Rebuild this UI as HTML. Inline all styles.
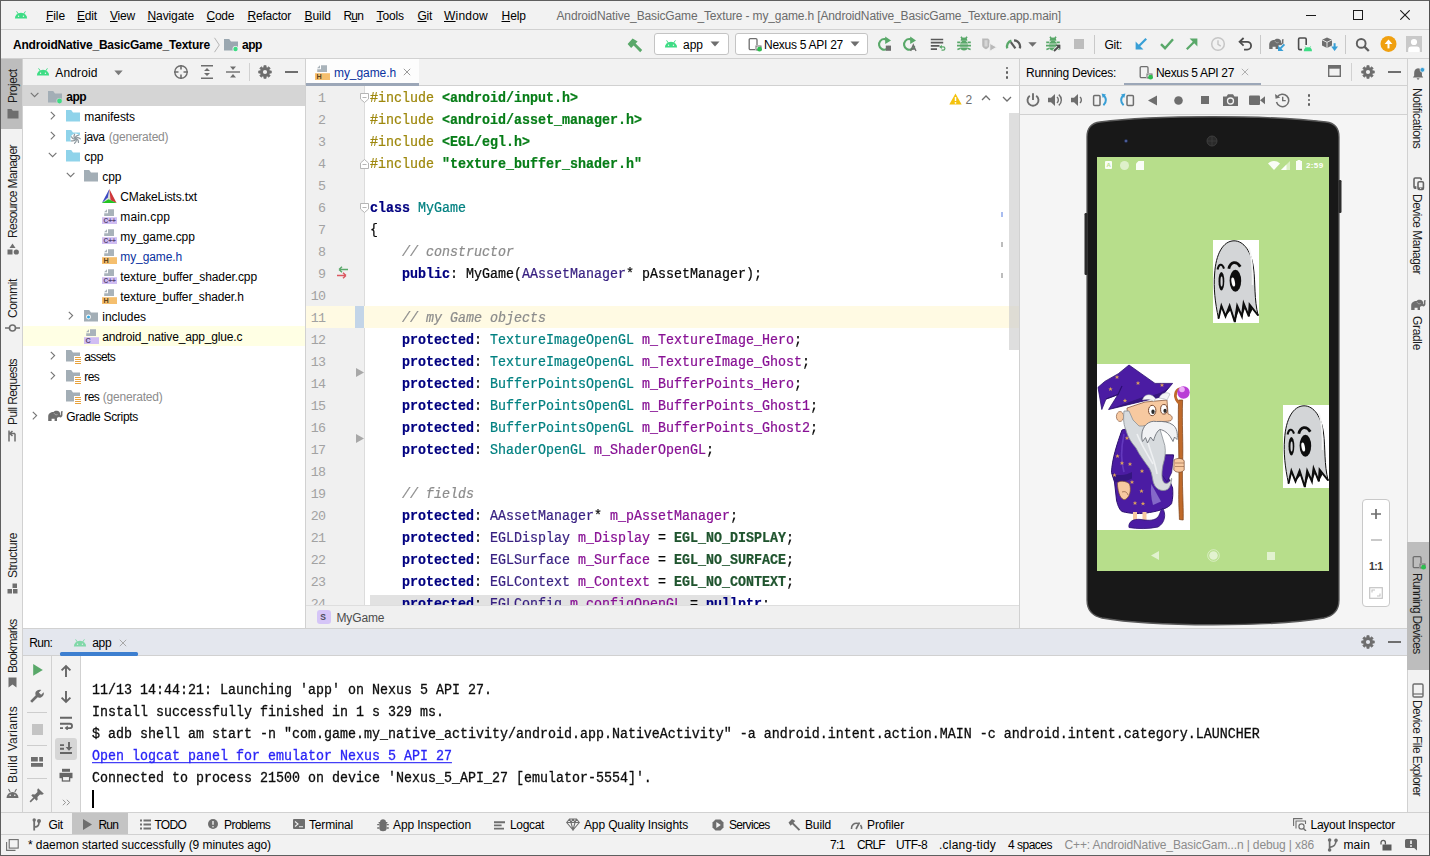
<!DOCTYPE html>
<html><head><meta charset="utf-8"><title>Android Studio</title>
<style>
html,body{margin:0;padding:0}
body{width:1430px;height:856px;position:relative;overflow:hidden;background:#f2f2f2;font-family:"Liberation Sans",sans-serif;font-size:12px;color:#000}
u{text-decoration:underline;text-underline-offset:1px}
</style></head>
<body>
<div style="position:absolute;left:0px;top:0px;width:1430px;height:29px;background:#f2f2f2;"></div>
<div style="position:absolute;left:0px;top:29px;width:1430px;height:1px;background:#d1d1d1;"></div>
<svg style="position:absolute;left:14px;top:8px;" width="14" height="14" viewBox="0 0 16 16"><path d="M1 12 A7 6.5 0 0 1 15 12 Z" fill="#3ddc84"/><path d="M3.2 4.2 L5 7 M12.8 4.2 L11 7" stroke="#3ddc84" stroke-width="1.1" stroke-linecap="round"/><circle cx="5.2" cy="9.5" r="0.8" fill="#f2f2f2"/><circle cx="10.8" cy="9.5" r="0.8" fill="#f2f2f2"/></svg>
<div style="position:absolute;left:46px;top:7.34px;line-height:18px;font-size:12px;font-family:'Liberation Sans',sans-serif;color:#000;white-space:pre;letter-spacing:-0.084px;"><u>F</u>ile</div>
<div style="position:absolute;left:77px;top:7.34px;line-height:18px;font-size:12px;font-family:'Liberation Sans',sans-serif;color:#000;white-space:pre;letter-spacing:-0.169px;"><u>E</u>dit</div>
<div style="position:absolute;left:110px;top:7.34px;line-height:18px;font-size:12px;font-family:'Liberation Sans',sans-serif;color:#000;white-space:pre;letter-spacing:-0.198px;"><u>V</u>iew</div>
<div style="position:absolute;left:147.5px;top:7.34px;line-height:18px;font-size:12px;font-family:'Liberation Sans',sans-serif;color:#000;white-space:pre;letter-spacing:-0.108px;"><u>N</u>avigate</div>
<div style="position:absolute;left:206.5px;top:7.34px;line-height:18px;font-size:12px;font-family:'Liberation Sans',sans-serif;color:#000;white-space:pre;letter-spacing:-0.297px;"><u>C</u>ode</div>
<div style="position:absolute;left:247.5px;top:7.34px;line-height:18px;font-size:12px;font-family:'Liberation Sans',sans-serif;color:#000;white-space:pre;letter-spacing:-0.231px;"><u>R</u>efactor</div>
<div style="position:absolute;left:304.5px;top:7.34px;line-height:18px;font-size:12px;font-family:'Liberation Sans',sans-serif;color:#000;white-space:pre;letter-spacing:-0.037px;"><u>B</u>uild</div>
<div style="position:absolute;left:343.5px;top:7.34px;line-height:18px;font-size:12px;font-family:'Liberation Sans',sans-serif;color:#000;white-space:pre;letter-spacing:-0.838px;">R<u>u</u>n</div>
<div style="position:absolute;left:376.5px;top:7.34px;line-height:18px;font-size:12px;font-family:'Liberation Sans',sans-serif;color:#000;white-space:pre;letter-spacing:-0.103px;"><u>T</u>ools</div>
<div style="position:absolute;left:417.5px;top:7.34px;line-height:18px;font-size:12px;font-family:'Liberation Sans',sans-serif;color:#000;white-space:pre;letter-spacing:-0.278px;"><u>G</u>it</div>
<div style="position:absolute;left:444px;top:7.34px;line-height:18px;font-size:12px;font-family:'Liberation Sans',sans-serif;color:#000;white-space:pre;letter-spacing:0.220px;"><u>W</u>indow</div>
<div style="position:absolute;left:501.5px;top:7.34px;line-height:18px;font-size:12px;font-family:'Liberation Sans',sans-serif;color:#000;white-space:pre;letter-spacing:-0.045px;"><u>H</u>elp</div>
<div style="position:absolute;left:556.5px;top:7.34px;line-height:18px;font-size:12px;font-family:'Liberation Sans',sans-serif;color:#6b6b6b;white-space:pre;letter-spacing:-0.137px;">AndroidNative_BasicGame_Texture - my_game.h [AndroidNative_BasicGame_Texture.app.main]</div>
<div style="position:absolute;left:1306px;top:15px;width:10px;height:1px;background:#1a1a1a;"></div>
<div style="position:absolute;left:1353px;top:10px;width:8px;height:8px;border:1px solid #1a1a1a"></div>
<svg style="position:absolute;left:1400px;top:10px;" width="10" height="10" viewBox="0 0 10 10"><path d="M0.3 0.3 L9.7 9.7 M9.7 0.3 L0.3 9.7" stroke="#1a1a1a" stroke-width="1.1" fill="none"/></svg>
<div style="position:absolute;left:0px;top:30px;width:1430px;height:28px;background:#f2f2f2;"></div>
<div style="position:absolute;left:0px;top:58px;width:1430px;height:1px;background:#d1d1d1;"></div>
<div style="position:absolute;left:13px;top:35.84px;line-height:18px;font-size:12px;font-family:'Liberation Sans',sans-serif;color:#000;white-space:pre;font-weight:bold;letter-spacing:-0.200px;">AndroidNative_BasicGame_Texture</div>
<svg style="position:absolute;left:213px;top:36.5px;" width="8" height="16" viewBox="0 0 8 16"><path d="M1.5 0.8 L6.3 8 L1.5 15.2" stroke="#b4b4b4" stroke-width="1" fill="none"/></svg>
<svg style="position:absolute;left:223px;top:37px;" width="16" height="16" viewBox="0 0 16 16"><path d="M1 2 H6.2 L8 4.5 H15 V13.5 H1 Z" fill="#9aa7b0"/><circle cx="12.5" cy="12" r="3" fill="#f2f2f2"/><circle cx="12.5" cy="12" r="2.2" fill="#3ddc84"/></svg>
<div style="position:absolute;left:242px;top:35.84px;line-height:18px;font-size:12px;font-family:'Liberation Sans',sans-serif;color:#000;white-space:pre;font-weight:bold;letter-spacing:-0.445px;">app</div>
<svg style="position:absolute;left:626px;top:36.5px;" width="17" height="17" viewBox="0 0 17 17"><path d="M1.6 7.1 L6.6 1.6 L11.6 4.6 L9.6 6.6 L16.2 13.1 L14.2 15.2 L7.6 8.6 L5.1 11.1 Z" fill="#59a869"/></svg>
<div style="position:absolute;left:654px;top:33px;width:73px;height:20px;background:#fff;border:1px solid #c4c4c4;border-radius:3px"></div>
<svg style="position:absolute;left:664px;top:37px;" width="14" height="14" viewBox="0 0 16 16"><path d="M1 12 A7 6.5 0 0 1 15 12 Z" fill="#3ddc84"/><path d="M3.2 4.2 L5 7 M12.8 4.2 L11 7" stroke="#3ddc84" stroke-width="1.1" stroke-linecap="round"/><circle cx="5.2" cy="9.5" r="0.8" fill="#f2f2f2"/><circle cx="10.8" cy="9.5" r="0.8" fill="#f2f2f2"/></svg>
<div style="position:absolute;left:683px;top:36.04px;line-height:18px;font-size:12px;font-family:'Liberation Sans',sans-serif;color:#000;white-space:pre;letter-spacing:-0.007px;">app</div>
<svg style="position:absolute;left:710px;top:41px;" width="10" height="6" viewBox="0 0 10 6"><path d="M0.5 0.5 H9.5 L5 5.5 Z" fill="#6e6e6e"/></svg>
<div style="position:absolute;left:735px;top:33px;width:131px;height:20px;background:#fff;border:1px solid #c4c4c4;border-radius:3px"></div>
<svg style="position:absolute;left:747px;top:36px;" width="16" height="16" viewBox="0 0 16 16"><rect x="2.2" y="2.6" width="7.8" height="11" rx="1.2" stroke="#6e6e6e" stroke-width="1.3" fill="none"/><rect x="8" y="9" width="7" height="6" fill="#fff"/><rect x="9" y="10" width="5" height="4" stroke="#6e6e6e" stroke-width="1" fill="#fff"/><circle cx="12.5" cy="13.2" r="2.4" fill="#2dbd4e"/></svg>
<div style="position:absolute;left:764px;top:36.04px;line-height:18px;font-size:12px;font-family:'Liberation Sans',sans-serif;color:#000;white-space:pre;letter-spacing:-0.266px;">Nexus 5 API 27</div>
<svg style="position:absolute;left:850px;top:41px;" width="10" height="6" viewBox="0 0 10 6"><path d="M0.5 0.5 H9.5 L5 5.5 Z" fill="#6e6e6e"/></svg>
<svg style="position:absolute;left:877px;top:36.2px;" width="16" height="16" viewBox="0 0 16 16"><path d="M11.6 5.2 A5.3 5.3 0 1 0 12.4 10" stroke="#59a869" stroke-width="2.1" fill="none"/><path d="M8.2 0.6 L14 4.4 L8.2 8 Z" fill="#59a869"/><rect x="8.8" y="9.6" width="5.2" height="5.2" fill="#6e6e6e"/></svg>
<svg style="position:absolute;left:902px;top:36.2px;" width="16" height="16" viewBox="0 0 16 16"><path d="M11.6 5.2 A5.3 5.3 0 1 0 12.4 10" stroke="#59a869" stroke-width="2.1" fill="none"/><path d="M8.2 0.6 L14 4.4 L8.2 8 Z" fill="#59a869"/><path d="M8.6 15 L11.3 8.8 L14 15 M9.6 13 H13" stroke="#6e6e6e" stroke-width="1.3" fill="none"/></svg>
<svg style="position:absolute;left:929px;top:36.2px;" width="17" height="16" viewBox="0 0 17 16"><path d="M1.8 3.5 H14.2 M1.8 6.7 H14.2 M1.8 9.9 H10.5 M1.8 13.1 H8" stroke="#5a5a5a" stroke-width="1.7"/><path d="M11.5 10.8 H14.2 A1.7 1.7 0 0 1 14.2 14.2 H12.5" stroke="#59a869" stroke-width="1.2" fill="none"/><path d="M12.8 8.8 L10.2 10.9 L12.8 13 Z" fill="#59a869"/></svg>
<svg style="position:absolute;left:956px;top:36.2px;" width="16" height="16" viewBox="0 0 16 16"><ellipse cx="8" cy="9.6" rx="4.1" ry="5" fill="#59a869"/><path d="M4.6 4.8 A3.4 3.4 0 0 1 11.4 4.8 Z" fill="#59a869"/><path d="M1.2 6.4 H4.4 M1 9.6 H4.2 M1.4 13.4 L4.6 12.2 M14.8 6.4 H11.6 M15 9.6 H11.8 M14.6 13.4 L11.4 12.2 M5 0.8 L6.4 2.8 M11 0.8 L9.6 2.8" stroke="#59a869" stroke-width="1.6" fill="none"/><path d="M4 8 H12 M4 11.2 H12" stroke="#f2f2f2" stroke-width="0.7"/></svg>
<svg style="position:absolute;left:981px;top:36.2px;" width="17" height="16" viewBox="0 0 17 16"><path d="M1.2 2.5 H7 L8.5 4 V9 C8.5 11 7 12.5 5 13.2 C2.5 12.5 1.2 11 1.2 9 Z" fill="#b9b9b9"/><path d="M3.5 4.2 H6.5 V10.5 H3.5 Z" fill="#d6d6d6"/><path d="M8.8 7.3 L15.6 11.2 L8.8 15.2 Z" fill="#b9b9b9" stroke="#f2f2f2" stroke-width="0.9"/></svg>
<svg style="position:absolute;left:1004px;top:36.2px;" width="18" height="16" viewBox="0 0 18 16"><path d="M10 4.3 A6.3 6.3 0 0 1 15.8 12.4" stroke="#5a5a5a" stroke-width="2.3" fill="none"/><path d="M3.2 12.4 A6.3 6.3 0 0 1 7.4 4.6" stroke="#59a869" stroke-width="2.3" fill="none"/><path d="M6.8 6.2 L11.4 12.4" stroke="#5a5a5a" stroke-width="2.2"/></svg>
<svg style="position:absolute;left:1028px;top:42px;" width="9" height="5" viewBox="0 0 9 5"><path d="M0.3 0.3 H8.7 L4.5 4.7 Z" fill="#6e6e6e"/></svg>
<svg style="position:absolute;left:1045px;top:36.2px;" width="17" height="16" viewBox="0 0 17 16"><ellipse cx="8" cy="9.6" rx="4.1" ry="5" fill="#59a869"/><path d="M4.6 4.8 A3.4 3.4 0 0 1 11.4 4.8 Z" fill="#59a869"/><path d="M1.2 6.4 H4.4 M1 9.6 H4.2 M1.4 13.4 L4.6 12.2 M14.8 6.4 H11.6 M15 9.6 H11.8 M14.6 13.4 L11.4 12.2 M5 0.8 L6.4 2.8 M11 0.8 L9.6 2.8" stroke="#59a869" stroke-width="1.6" fill="none"/><path d="M4 8 H12 M4 11.2 H12" stroke="#f2f2f2" stroke-width="0.7"/><path d="M8.8 15.2 L14.5 9.8" stroke="#f2f2f2" stroke-width="3.6"/><path d="M9 15 L14.3 10" stroke="#4d4d4d" stroke-width="1.9" fill="none"/><path d="M10.6 8.8 H15.4 V13.6 Z" fill="#4d4d4d"/></svg>
<div style="position:absolute;left:1073.5px;top:39.3px;width:10px;height:10px;background:#bdbdbd;"></div>
<div style="position:absolute;left:1094px;top:35px;width:1px;height:19px;background:#c9c9c9;"></div>
<div style="position:absolute;left:1104.5px;top:36.14px;line-height:18px;font-size:12px;font-family:'Liberation Sans',sans-serif;color:#000;white-space:pre;letter-spacing:-0.292px;">Git:</div>
<svg style="position:absolute;left:1133px;top:36.2px;" width="16" height="16" viewBox="0 0 16 16"><path d="M13.2 2.8 L5 11" stroke="#389fd6" stroke-width="2.2" fill="none"/><path d="M2.6 5.6 V13.4 H10.4 Z" fill="#389fd6"/></svg>
<svg style="position:absolute;left:1159px;top:36.2px;" width="16" height="16" viewBox="0 0 16 16"><path d="M2 8.2 L6 12.2 L14 3.2" stroke="#59a869" stroke-width="2.4" fill="none"/></svg>
<svg style="position:absolute;left:1184px;top:36.2px;" width="16" height="16" viewBox="0 0 16 16"><path d="M2.8 13.2 L11 5" stroke="#59a869" stroke-width="2.2" fill="none"/><path d="M5.6 2.6 H13.4 V10.4 Z" fill="#59a869"/></svg>
<svg style="position:absolute;left:1210px;top:36.2px;" width="16" height="16" viewBox="0 0 16 16"><circle cx="8" cy="8" r="6.3" stroke="#c6c6c6" stroke-width="1.5" fill="none"/><path d="M8 4.2 V8.4 L10.8 10.2" stroke="#c6c6c6" stroke-width="1.4" fill="none"/></svg>
<svg style="position:absolute;left:1237px;top:36.2px;" width="16" height="16" viewBox="0 0 16 16"><path d="M3.5 5.8 H10.2 A3.9 3.9 0 0 1 10.2 13.6 H7" stroke="#4d4d4d" stroke-width="1.8" fill="none"/><path d="M6.6 2 L2.6 5.8 L6.6 9.6" stroke="#4d4d4d" stroke-width="1.8" fill="none"/></svg>
<div style="position:absolute;left:1260px;top:35px;width:1px;height:19px;background:#c9c9c9;"></div>
<svg style="position:absolute;left:1268px;top:36.2px;" width="18" height="16" viewBox="0 0 18 16"><path d="M1.2 13 V8.5 C1.2 5.5 3.5 4 6.5 4 C7.5 2.8 9.5 2.5 11 3.1 C12.6 3.7 13.3 5.2 13.2 6.8 C13.2 7.5 13.8 7.5 13.9 6.8 C14 5.5 13.6 4.4 14.2 3.5 C14.8 2.7 15.9 3.1 15.6 4.1 C15.2 5.1 15.6 6.4 15.4 7.6 C15.1 9.4 13.2 9.9 12 8.8 C11.4 9.4 10.6 9.8 10 9.8 V13 H7.6 V10.8 H4.6 V13 Z" fill="#6e6e6e"/><path d="M7 5.2 C7.8 6.8 9.4 7.2 10.6 6.4" stroke="#f2f2f2" stroke-width="0.6" fill="none" opacity="0.7"/><path d="M16.2 8.6 L12 12.8" stroke="#f2f2f2" stroke-width="3.4"/><path d="M16.4 8.4 L12.2 12.6" stroke="#389fd6" stroke-width="2" fill="none"/><path d="M10 9.4 V15 H15.6 Z" fill="#389fd6"/></svg>
<svg style="position:absolute;left:1297px;top:35.8px;" width="16" height="16" viewBox="0 0 16 16"><rect x="1.6" y="2" width="7.6" height="11.6" rx="1.2" stroke="#4d4d4d" stroke-width="1.6" fill="none"/><rect x="5" y="9" width="11" height="7" fill="#f2f2f2"/><path d="M6.8 15.3 A4.1 4.1 0 0 1 15 15.3 Z" fill="#3ddc84"/><path d="M8.2 10.4 L9.2 12 M13.6 10.4 L12.6 12" stroke="#3ddc84" stroke-width="0.8"/></svg>
<svg style="position:absolute;left:1321px;top:35.8px;" width="18" height="16" viewBox="0 0 18 16"><path d="M6 1.5 L11 3.8 V9.5 L6 12 L1 9.5 V3.8 Z" fill="#6e6e6e"/><path d="M6 6.3 V12 M1 3.8 L6 6.3 L11 3.8" stroke="#f2f2f2" stroke-width="0.9" fill="none"/><path d="M13.6 7.2 V12" stroke="#389fd6" stroke-width="2"/><path d="M10.2 10.6 H17 L13.6 15 Z" fill="#389fd6"/></svg>
<div style="position:absolute;left:1345px;top:35px;width:1px;height:19px;background:#c9c9c9;"></div>
<svg style="position:absolute;left:1354px;top:35.5px;" width="17" height="16" viewBox="0 0 17 16"><circle cx="7.2" cy="7.4" r="4.4" stroke="#5e5e5e" stroke-width="1.9" fill="none"/><path d="M10.4 10.6 L14.8 15" stroke="#5e5e5e" stroke-width="2.3"/></svg>
<svg style="position:absolute;left:1379.6px;top:35.1px;" width="17" height="18" viewBox="0 0 17 18"><circle cx="8.5" cy="8.9" r="8" fill="#f0a010"/><path d="M8.5 13.4 V6.5" stroke="#fff" stroke-width="2"/><path d="M4.6 9 L8.5 4.4 L12.4 9 Z" fill="#fff"/></svg>
<svg style="position:absolute;left:1406px;top:36px;" width="16" height="16" viewBox="0 0 16 16"><rect width="16" height="17" fill="#c9c9c9"/><circle cx="8" cy="6" r="3.1" fill="#fff"/><path d="M2.2 17 V13.5 A3 3 0 0 1 5.2 10.5 H10.8 A3 3 0 0 1 13.8 13.5 V17 Z" fill="#fff"/></svg>
<div style="position:absolute;left:1px;top:59px;width:21px;height:753px;background:#f2f2f2;"></div>
<div style="position:absolute;left:22px;top:59px;width:1px;height:753px;background:#d1d1d1;"></div>
<div style="position:absolute;left:1px;top:59px;width:21px;height:70px;background:#bdbdbd;"></div>
<div style="position:absolute;left:5.0px;top:103px;line-height:16px;height:16px;font-size:12px;color:#1c1c1c;white-space:pre;transform-origin:0 0;transform:rotate(-90deg);letter-spacing:-0.550px;">Project</div>
<svg style="position:absolute;left:6.5px;top:108px;" width="12" height="11" viewBox="0 0 12 11"><path d="M0.5 1 H4.5 L5.8 2.8 H11.5 V10.5 H0.5 Z" fill="#6e6e6e"/></svg>
<div style="position:absolute;left:5.0px;top:238px;line-height:16px;height:16px;font-size:12px;color:#1c1c1c;white-space:pre;transform-origin:0 0;transform:rotate(-90deg);letter-spacing:-0.566px;">Resource Manager</div>
<svg style="position:absolute;left:7px;top:243px;" width="12" height="12" viewBox="0 0 12 12"><path d="M5.5 0.5 L8.5 5 H2.5 Z" fill="#6e6e6e"/><rect x="0.5" y="6.5" width="5" height="5" fill="#6e6e6e"/><circle cx="9.3" cy="9" r="2.6" fill="#6e6e6e"/></svg>
<div style="position:absolute;left:5.0px;top:318px;line-height:16px;height:16px;font-size:12px;color:#1c1c1c;white-space:pre;transform-origin:0 0;transform:rotate(-90deg);letter-spacing:-0.389px;">Commit</div>
<svg style="position:absolute;left:5px;top:323px;" width="15" height="10" viewBox="0 0 15 10"><circle cx="7.5" cy="5" r="3" stroke="#6e6e6e" stroke-width="1.6" fill="none"/><path d="M0 5 H4.5 M10.5 5 H15" stroke="#6e6e6e" stroke-width="1.6"/></svg>
<div style="position:absolute;left:5.0px;top:424.5px;line-height:16px;height:16px;font-size:12px;color:#1c1c1c;white-space:pre;transform-origin:0 0;transform:rotate(-90deg);letter-spacing:-0.618px;">Pull Requests</div>
<svg style="position:absolute;left:7px;top:430px;" width="12" height="12" viewBox="0 0 12 12"><path d="M2 0.5 V11.5 M2 3.5 H8 M8 3.5 V11.5 M5.5 1 L2.8 3.5 L5.5 6" stroke="#6e6e6e" stroke-width="1.5" fill="none"/></svg>
<div style="position:absolute;left:5.0px;top:578px;line-height:16px;height:16px;font-size:12px;color:#1c1c1c;white-space:pre;transform-origin:0 0;transform:rotate(-90deg);letter-spacing:-0.410px;">Structure</div>
<svg style="position:absolute;left:7px;top:583px;" width="11" height="11" viewBox="0 0 11 11"><rect x="5.5" y="0.5" width="4.5" height="4.5" fill="#6e6e6e"/><rect x="0.5" y="6" width="4.5" height="4.5" fill="#6e6e6e"/><rect x="6" y="6" width="4.5" height="4.5" fill="#6e6e6e"/></svg>
<div style="position:absolute;left:5.0px;top:672.5px;line-height:16px;height:16px;font-size:12px;color:#1c1c1c;white-space:pre;transform-origin:0 0;transform:rotate(-90deg);letter-spacing:-0.724px;">Bookmarks</div>
<svg style="position:absolute;left:8px;top:677px;" width="9" height="11" viewBox="0 0 9 11"><path d="M0.5 0.5 H8.5 V10.5 L4.5 7.5 L0.5 10.5 Z" fill="#6e6e6e"/></svg>
<div style="position:absolute;left:5.0px;top:783px;line-height:16px;height:16px;font-size:12px;color:#1c1c1c;white-space:pre;transform-origin:0 0;transform:rotate(-90deg);letter-spacing:0.275px;">Build Variants</div>
<svg style="position:absolute;left:6px;top:788px;" width="13" height="11" viewBox="0 0 13 11"><path d="M0.5 10 A6 6 0 0 1 12.5 10 Z" fill="#6e6e6e"/><path d="M2.5 1 L4.2 4 M10.5 1 L8.8 4" stroke="#6e6e6e" stroke-width="1.1"/><circle cx="4.2" cy="7.3" r="0.8" fill="#f2f2f2"/><circle cx="8.8" cy="7.3" r="0.8" fill="#f2f2f2"/></svg>
<div style="position:absolute;left:23px;top:59px;width:282px;height:27px;background:#f2f2f2;"></div>
<div style="position:absolute;left:305px;top:59px;width:1px;height:570px;background:#d1d1d1;"></div>
<svg style="position:absolute;left:36px;top:65.3px;" width="14" height="14" viewBox="0 0 16 16"><path d="M1 12 A7 6.5 0 0 1 15 12 Z" fill="#3ddc84"/><path d="M3.2 4.2 L5 7 M12.8 4.2 L11 7" stroke="#3ddc84" stroke-width="1.1" stroke-linecap="round"/><circle cx="5.2" cy="9.5" r="0.8" fill="#f2f2f2"/><circle cx="10.8" cy="9.5" r="0.8" fill="#f2f2f2"/></svg>
<div style="position:absolute;left:55.3px;top:64.14px;line-height:18px;font-size:12px;font-family:'Liberation Sans',sans-serif;color:#000;white-space:pre;letter-spacing:0.134px;">Android</div>
<svg style="position:absolute;left:114px;top:70px;" width="9" height="6" viewBox="0 0 9 6"><path d="M0.3 0.5 H8.7 L4.5 5.3 Z" fill="#7a7a7a"/></svg>
<svg style="position:absolute;left:173px;top:64px;" width="16" height="16" viewBox="0 0 16 16"><circle cx="8" cy="8" r="6.2" stroke="#6e6e6e" stroke-width="1.4" fill="none"/><path d="M8 1 V5.5 M8 10.5 V15 M1 8 H5.5 M10.5 8 H15" stroke="#6e6e6e" stroke-width="1.6"/></svg>
<svg style="position:absolute;left:199px;top:64px;" width="16" height="16" viewBox="0 0 16 16"><path d="M2 1.7 H14 M2 14.3 H14" stroke="#6e6e6e" stroke-width="1.4"/><path d="M8 4 L11 7 H5 Z M8 12 L11 9 H5 Z" fill="#6e6e6e"/></svg>
<svg style="position:absolute;left:225px;top:64px;" width="16" height="16" viewBox="0 0 16 16"><path d="M1 8 H15" stroke="#6e6e6e" stroke-width="1.4"/><path d="M8 6 L11 2.5 H5 Z M8 10 L11 13.5 H5 Z" fill="#6e6e6e"/></svg>
<div style="position:absolute;left:249px;top:63px;width:1px;height:18px;background:#d1d1d1;"></div>
<svg style="position:absolute;left:257px;top:64px;" width="16" height="16" viewBox="0 0 16 16"><path d="M6.74 3.26 L6.90 1.59 L9.10 1.59 L9.26 3.26 L10.46 3.76 L11.75 2.69 L13.31 4.25 L12.24 5.54 L12.74 6.74 L14.41 6.90 L14.41 9.10 L12.74 9.26 L12.24 10.46 L13.31 11.75 L11.75 13.31 L10.46 12.24 L9.26 12.74 L9.10 14.41 L6.90 14.41 L6.74 12.74 L5.54 12.24 L4.25 13.31 L2.69 11.75 L3.76 10.46 L3.26 9.26 L1.59 9.10 L1.59 6.90 L3.26 6.74 L3.76 5.54 L2.69 4.25 L4.25 2.69 L5.54 3.76 Z" fill="#6e6e6e" stroke="#6e6e6e" stroke-width="0.6" stroke-linejoin="round"/><circle cx="8" cy="8" r="2.1" fill="#f2f2f2"/></svg>
<div style="position:absolute;left:285px;top:71px;width:13px;height:2px;background:#6e6e6e;"></div>
<div style="position:absolute;left:23px;top:86px;width:282px;height:543px;background:#fff;"></div>
<div style="position:absolute;left:23px;top:85px;width:282px;height:21px;background:#d5d5d5;"></div>
<div style="position:absolute;left:23px;top:326px;width:282px;height:20px;background:#ffffe4;"></div>
<svg style="position:absolute;left:30.2px;top:92.4px;" width="10" height="6" viewBox="0 0 10 6"><path d="M0.8 0.8 L4.6 4.6 L8.4 0.8" stroke="#767676" stroke-width="1.15" fill="none"/></svg>
<svg style="position:absolute;left:47px;top:89px;" width="16" height="16" viewBox="0 0 16 16"><path d="M1 2 H6.2 L8 4.5 H15 V13.5 H1 Z" fill="#a3aeb6"/><circle cx="12.5" cy="12" r="3.1" fill="#d5d5d5"/><circle cx="12.5" cy="12" r="2.4" fill="#3ddc84"/></svg>
<div style="position:absolute;left:66.3px;top:88.34px;line-height:18px;font-size:12px;font-family:'Liberation Sans',sans-serif;color:#000;white-space:pre;font-weight:bold;letter-spacing:-0.545px;">app</div>
<svg style="position:absolute;left:49.7px;top:111px;" width="6" height="10" viewBox="0 0 6 10"><path d="M0.8 0.8 L4.6 4.6 L0.8 8.4" stroke="#767676" stroke-width="1.15" fill="none"/></svg>
<svg style="position:absolute;left:65px;top:108px;" width="16" height="16" viewBox="0 0 16 16"><path d="M1 2 H6.2 L8 4.5 H15 V13.5 H1 Z" fill="#8fd3ea"/></svg>
<div style="position:absolute;left:84.3px;top:108.34px;line-height:18px;font-size:12px;font-family:'Liberation Sans',sans-serif;color:#000;white-space:pre;letter-spacing:-0.072px;">manifests</div>
<svg style="position:absolute;left:49.7px;top:131px;" width="6" height="10" viewBox="0 0 6 10"><path d="M0.8 0.8 L4.6 4.6 L0.8 8.4" stroke="#767676" stroke-width="1.15" fill="none"/></svg>
<svg style="position:absolute;left:65px;top:128px;" width="16" height="16" viewBox="0 0 16 16"><path d="M1 2 H6.2 L8 4.5 H15 V13.5 H1 Z" fill="#8fd3ea"/><circle cx="10.6" cy="10.8" r="5.2" fill="#fff"/><g stroke="#8e989e" stroke-width="1.25" fill="none" stroke-linecap="round"><path d="M10.60 10.80 Q12.34 8.61 15.20 10.80" /><path d="M10.60 10.80 Q13.40 10.79 13.47 14.40" /><path d="M10.60 10.80 Q12.35 12.98 9.58 15.28" /><path d="M10.60 10.80 Q9.98 13.53 6.46 12.80" /><path d="M10.60 10.80 Q8.08 12.02 6.46 8.80" /><path d="M10.60 10.80 Q8.07 9.59 9.58 6.32" /><path d="M10.60 10.80 Q9.97 8.07 13.47 7.20" /></g></svg>
<div style="position:absolute;left:84.3px;top:128.34px;line-height:18px;font-size:12px;font-family:'Liberation Sans',sans-serif;color:#000;white-space:pre;letter-spacing:-0.453px;">java</div>
<div style="position:absolute;left:108.8px;top:128.34px;line-height:18px;font-size:12px;font-family:'Liberation Sans',sans-serif;color:#8c8c8c;white-space:pre;letter-spacing:-0.231px;">(generated)</div>
<svg style="position:absolute;left:48.2px;top:152.4px;" width="10" height="6" viewBox="0 0 10 6"><path d="M0.8 0.8 L4.6 4.6 L8.4 0.8" stroke="#767676" stroke-width="1.15" fill="none"/></svg>
<svg style="position:absolute;left:65px;top:148px;" width="16" height="16" viewBox="0 0 16 16"><path d="M1 2 H6.2 L8 4.5 H15 V13.5 H1 Z" fill="#8fd3ea"/></svg>
<div style="position:absolute;left:84.3px;top:148.34px;line-height:18px;font-size:12px;font-family:'Liberation Sans',sans-serif;color:#000;white-space:pre;letter-spacing:-0.116px;">cpp</div>
<svg style="position:absolute;left:66.2px;top:172.4px;" width="10" height="6" viewBox="0 0 10 6"><path d="M0.8 0.8 L4.6 4.6 L8.4 0.8" stroke="#767676" stroke-width="1.15" fill="none"/></svg>
<svg style="position:absolute;left:83px;top:168px;" width="16" height="16" viewBox="0 0 16 16"><path d="M1 2 H6.2 L8 4.5 H15 V13.5 H1 Z" fill="#a3aeb6"/></svg>
<div style="position:absolute;left:102.3px;top:168.34px;line-height:18px;font-size:12px;font-family:'Liberation Sans',sans-serif;color:#000;white-space:pre;letter-spacing:-0.049px;">cpp</div>
<svg style="position:absolute;left:102px;top:189px;" width="16" height="16" viewBox="0 0 16 16"><path d="M7.4 0 L0 14 H14.5 Z" fill="#d8d8d8"/><path d="M7.4 0 L0 14 L5.8 8.6 Z" fill="#3b48c4"/><path d="M7.4 0.2 L14.5 14 L8.6 11.3 Z" fill="#d0363a"/><path d="M0 14 H14.5 L6.6 10.2 Z" fill="#22c522"/></svg>
<div style="position:absolute;left:120.3px;top:188.34px;line-height:18px;font-size:12px;font-family:'Liberation Sans',sans-serif;color:#000;white-space:pre;letter-spacing:-0.142px;">CMakeLists.txt</div>
<svg style="position:absolute;left:102px;top:209px;" width="16" height="16" viewBox="0 0 16 16"><path d="M6 0.2 H12 V7 H2.2 V4.2 H6 Z" fill="#a9b3ba"/><path d="M5 0.2 V3.2 H2 Z" fill="#a9b3ba"/><rect x="0" y="8.2" width="15" height="6.8" fill="#d0bdf2"/><text x="1.4" y="14.4" font-family="Liberation Sans" font-weight="bold" font-size="6.6" fill="#5b4a75">C++</text></svg>
<div style="position:absolute;left:120.3px;top:208.34px;line-height:18px;font-size:12px;font-family:'Liberation Sans',sans-serif;color:#000;white-space:pre;letter-spacing:0.126px;">main.cpp</div>
<svg style="position:absolute;left:102px;top:229px;" width="16" height="16" viewBox="0 0 16 16"><path d="M6 0.2 H12 V7 H2.2 V4.2 H6 Z" fill="#a9b3ba"/><path d="M5 0.2 V3.2 H2 Z" fill="#a9b3ba"/><rect x="0" y="8.2" width="15" height="6.8" fill="#d0bdf2"/><text x="1.4" y="14.4" font-family="Liberation Sans" font-weight="bold" font-size="6.6" fill="#5b4a75">C++</text></svg>
<div style="position:absolute;left:120.3px;top:228.34px;line-height:18px;font-size:12px;font-family:'Liberation Sans',sans-serif;color:#000;white-space:pre;letter-spacing:-0.079px;">my_game.cpp</div>
<svg style="position:absolute;left:102px;top:249px;" width="16" height="16" viewBox="0 0 16 16"><path d="M6 0.2 H12 V7 H2.2 V4.2 H6 Z" fill="#a9b3ba"/><path d="M5 0.2 V3.2 H2 Z" fill="#a9b3ba"/><rect x="0" y="8.2" width="15" height="6.8" fill="#f5bf6e"/><text x="1.6" y="14.4" font-family="Liberation Sans" font-weight="bold" font-size="7.2" fill="#5c4320">H</text></svg>
<div style="position:absolute;left:120.3px;top:248.34px;line-height:18px;font-size:12px;font-family:'Liberation Sans',sans-serif;color:#0a32a0;white-space:pre;letter-spacing:-0.111px;">my_game.h</div>
<svg style="position:absolute;left:102px;top:269px;" width="16" height="16" viewBox="0 0 16 16"><path d="M6 0.2 H12 V7 H2.2 V4.2 H6 Z" fill="#a9b3ba"/><path d="M5 0.2 V3.2 H2 Z" fill="#a9b3ba"/><rect x="0" y="8.2" width="15" height="6.8" fill="#d0bdf2"/><text x="1.4" y="14.4" font-family="Liberation Sans" font-weight="bold" font-size="6.6" fill="#5b4a75">C++</text></svg>
<div style="position:absolute;left:120.3px;top:268.34px;line-height:18px;font-size:12px;font-family:'Liberation Sans',sans-serif;color:#000;white-space:pre;letter-spacing:-0.101px;">texture_buffer_shader.cpp</div>
<svg style="position:absolute;left:102px;top:289px;" width="16" height="16" viewBox="0 0 16 16"><path d="M6 0.2 H12 V7 H2.2 V4.2 H6 Z" fill="#a9b3ba"/><path d="M5 0.2 V3.2 H2 Z" fill="#a9b3ba"/><rect x="0" y="8.2" width="15" height="6.8" fill="#f5bf6e"/><text x="1.6" y="14.4" font-family="Liberation Sans" font-weight="bold" font-size="7.2" fill="#5c4320">H</text></svg>
<div style="position:absolute;left:120.3px;top:288.34px;line-height:18px;font-size:12px;font-family:'Liberation Sans',sans-serif;color:#000;white-space:pre;letter-spacing:-0.132px;">texture_buffer_shader.h</div>
<svg style="position:absolute;left:67.7px;top:311px;" width="6" height="10" viewBox="0 0 6 10"><path d="M0.8 0.8 L4.6 4.6 L0.8 8.4" stroke="#767676" stroke-width="1.15" fill="none"/></svg>
<svg style="position:absolute;left:83px;top:308px;" width="16" height="16" viewBox="0 0 16 16"><path d="M1 2 H6.2 L8 4.5 H15 V13.5 H1 Z" fill="#a3aeb6"/><circle cx="5.5" cy="9" r="2.4" fill="#fff"/><circle cx="5.5" cy="9" r="1.5" fill="#35a7e0"/></svg>
<div style="position:absolute;left:102.3px;top:308.34px;line-height:18px;font-size:12px;font-family:'Liberation Sans',sans-serif;color:#000;white-space:pre;letter-spacing:-0.041px;">includes</div>
<svg style="position:absolute;left:84px;top:329px;" width="16" height="16" viewBox="0 0 16 16"><path d="M6 0.2 H12 V7 H2.2 V4.2 H6 Z" fill="#a9b3ba"/><path d="M5 0.2 V3.2 H2 Z" fill="#a9b3ba"/><rect x="0" y="8.2" width="15" height="6.8" fill="#d0bdf2"/><text x="1.6" y="14.4" font-family="Liberation Sans" font-weight="bold" font-size="7.2" fill="#5b4a75">C</text></svg>
<div style="position:absolute;left:102.3px;top:328.34px;line-height:18px;font-size:12px;font-family:'Liberation Sans',sans-serif;color:#000;white-space:pre;letter-spacing:-0.165px;">android_native_app_glue.c</div>
<svg style="position:absolute;left:49.7px;top:351px;" width="6" height="10" viewBox="0 0 6 10"><path d="M0.8 0.8 L4.6 4.6 L0.8 8.4" stroke="#767676" stroke-width="1.15" fill="none"/></svg>
<svg style="position:absolute;left:65px;top:348px;" width="16" height="16" viewBox="0 0 16 16"><path d="M1 2 H6.2 L8 4.5 H15 V13.5 H1 Z" fill="#a3aeb6"/><rect x="9" y="8" width="7" height="8" fill="#fff"/><path d="M10 9.5 H16 M10 11.5 H16 M10 13.5 H16 M10 15.5 H16" stroke="#e8a33d" stroke-width="1"/></svg>
<div style="position:absolute;left:84.3px;top:348.34px;line-height:18px;font-size:12px;font-family:'Liberation Sans',sans-serif;color:#000;white-space:pre;letter-spacing:-0.664px;">assets</div>
<svg style="position:absolute;left:49.7px;top:371px;" width="6" height="10" viewBox="0 0 6 10"><path d="M0.8 0.8 L4.6 4.6 L0.8 8.4" stroke="#767676" stroke-width="1.15" fill="none"/></svg>
<svg style="position:absolute;left:65px;top:368px;" width="16" height="16" viewBox="0 0 16 16"><path d="M1 2 H6.2 L8 4.5 H15 V13.5 H1 Z" fill="#a3aeb6"/><rect x="9" y="8" width="7" height="8" fill="#fff"/><path d="M10 9.5 H16 M10 11.5 H16 M10 13.5 H16 M10 15.5 H16" stroke="#e8a33d" stroke-width="1"/></svg>
<div style="position:absolute;left:84.3px;top:368.34px;line-height:18px;font-size:12px;font-family:'Liberation Sans',sans-serif;color:#000;white-space:pre;letter-spacing:-0.657px;">res</div>
<svg style="position:absolute;left:65px;top:388px;" width="16" height="16" viewBox="0 0 16 16"><path d="M1 2 H6.2 L8 4.5 H15 V13.5 H1 Z" fill="#a3aeb6"/><rect x="9" y="8" width="7" height="8" fill="#fff"/><path d="M10 9.5 H16 M10 11.5 H16 M10 13.5 H16 M10 15.5 H16" stroke="#e8a33d" stroke-width="1"/></svg>
<div style="position:absolute;left:84.3px;top:388.34px;line-height:18px;font-size:12px;font-family:'Liberation Sans',sans-serif;color:#000;white-space:pre;letter-spacing:-0.657px;">res</div>
<div style="position:absolute;left:102.8px;top:388.34px;line-height:18px;font-size:12px;font-family:'Liberation Sans',sans-serif;color:#8c8c8c;white-space:pre;letter-spacing:-0.213px;">(generated)</div>
<svg style="position:absolute;left:31.7px;top:411px;" width="6" height="10" viewBox="0 0 6 10"><path d="M0.8 0.8 L4.6 4.6 L0.8 8.4" stroke="#767676" stroke-width="1.15" fill="none"/></svg>
<svg style="position:absolute;left:47px;top:408px;" width="16" height="16" viewBox="0 0 16 16"><path d="M1.2 13 V8.5 C1.2 5.5 3.5 4 6.5 4 C7.5 2.8 9.5 2.5 11 3.1 C12.6 3.7 13.3 5.2 13.2 6.8 C13.2 7.5 13.8 7.5 13.9 6.8 C14 5.5 13.6 4.4 14.2 3.5 C14.8 2.7 15.9 3.1 15.6 4.1 C15.2 5.1 15.6 6.4 15.4 7.6 C15.1 9.4 13.2 9.9 12 8.8 C11.4 9.4 10.6 9.8 10 9.8 V13 H7.6 V10.8 H4.6 V13 Z" fill="#6e6e6e"/><path d="M7 5.2 C7.8 6.8 9.4 7.2 10.6 6.4" stroke="#f2f2f2" stroke-width="0.6" fill="none" opacity="0.7"/></svg>
<div style="position:absolute;left:66.3px;top:408.34px;line-height:18px;font-size:12px;font-family:'Liberation Sans',sans-serif;color:#000;white-space:pre;letter-spacing:-0.309px;">Gradle Scripts</div>
<div style="position:absolute;left:306px;top:59px;width:713px;height:26px;background:#f2f2f2;"></div>
<div style="position:absolute;left:306px;top:85px;width:713px;height:1px;background:#d1d1d1;"></div>
<div style="position:absolute;left:306px;top:59px;width:113px;height:24px;background:#fdfdfd;"></div>
<div style="position:absolute;left:306px;top:83px;width:113px;height:3px;background:#9ca7b8;"></div>
<svg style="position:absolute;left:315px;top:65px;" width="16" height="16" viewBox="0 0 16 16"><path d="M6 0.2 H12 V7 H2.2 V4.2 H6 Z" fill="#a9b3ba"/><path d="M5 0.2 V3.2 H2 Z" fill="#a9b3ba"/><rect x="0" y="8.2" width="15" height="6.8" fill="#f5bf6e"/><text x="1.6" y="14.4" font-family="Liberation Sans" font-weight="bold" font-size="7.2" fill="#5c4320">H</text></svg>
<div style="position:absolute;left:334px;top:64.24px;line-height:18px;font-size:12px;font-family:'Liberation Sans',sans-serif;color:#0a32a0;white-space:pre;letter-spacing:-0.077px;">my_game.h</div>
<svg style="position:absolute;left:403px;top:68px;" width="8" height="8" viewBox="0 0 8 8"><path d="M0.8 0.8 L7.2 7.2 M7.2 0.8 L0.8 7.2" stroke="#9a9a9a" stroke-width="1"/></svg>
<div style="position:absolute;left:1005.6px;top:66.6px;width:2.8px;height:2.8px;background:#5e5e5e;border-radius:1.4px;"></div>
<div style="position:absolute;left:1005.6px;top:71.19999999999999px;width:2.8px;height:2.8px;background:#5e5e5e;border-radius:1.4px;"></div>
<div style="position:absolute;left:1005.6px;top:75.8px;width:2.8px;height:2.8px;background:#5e5e5e;border-radius:1.4px;"></div>
<div style="position:absolute;left:306px;top:86px;width:713px;height:521px;background:#fff;overflow:hidden">
<div style="position:absolute;left:0;top:0;width:58px;height:521px;background:#f0f0f0"></div>
<div style="position:absolute;left:58px;top:0;width:1px;height:521px;background:#dcdcdc"></div>
<div style="position:absolute;left:0;top:220px;width:713px;height:22px;background:#fffae3"></div>
<div style="position:absolute;left:49px;top:220px;width:9px;height:22px;background:#c3d5e8"></div>
<div style="position:absolute;left:64px;top:509px;width:361px;height:12px;background:#e2e2e2"></div>
<div style="position:absolute;left:0;top:2px;width:19.5px;text-align:right;font-family:'Liberation Mono',monospace;font-size:13.333px;line-height:22px;white-space:pre;color:#a2a2a2;letter-spacing:-0.6px">1</div>
<div style="position:absolute;left:64px;top:2px;font-family:'Liberation Mono',monospace;font-size:13.333px;line-height:22px;white-space:pre;-webkit-text-stroke:0.22px;transform:scaleY(1.09);transform-origin:0 14.55px;color:#080808"><span style="color:#9e880d;">#include </span><span style="color:#067d17;font-weight:bold;">&lt;android/input.h&gt;</span></div>
<div style="position:absolute;left:0;top:24px;width:19.5px;text-align:right;font-family:'Liberation Mono',monospace;font-size:13.333px;line-height:22px;white-space:pre;color:#a2a2a2;letter-spacing:-0.6px">2</div>
<div style="position:absolute;left:64px;top:24px;font-family:'Liberation Mono',monospace;font-size:13.333px;line-height:22px;white-space:pre;-webkit-text-stroke:0.22px;transform:scaleY(1.09);transform-origin:0 14.55px;color:#080808"><span style="color:#9e880d;">#include </span><span style="color:#067d17;font-weight:bold;">&lt;android/asset_manager.h&gt;</span></div>
<div style="position:absolute;left:0;top:46px;width:19.5px;text-align:right;font-family:'Liberation Mono',monospace;font-size:13.333px;line-height:22px;white-space:pre;color:#a2a2a2;letter-spacing:-0.6px">3</div>
<div style="position:absolute;left:64px;top:46px;font-family:'Liberation Mono',monospace;font-size:13.333px;line-height:22px;white-space:pre;-webkit-text-stroke:0.22px;transform:scaleY(1.09);transform-origin:0 14.55px;color:#080808"><span style="color:#9e880d;">#include </span><span style="color:#067d17;font-weight:bold;">&lt;EGL/egl.h&gt;</span></div>
<div style="position:absolute;left:0;top:68px;width:19.5px;text-align:right;font-family:'Liberation Mono',monospace;font-size:13.333px;line-height:22px;white-space:pre;color:#a2a2a2;letter-spacing:-0.6px">4</div>
<div style="position:absolute;left:64px;top:68px;font-family:'Liberation Mono',monospace;font-size:13.333px;line-height:22px;white-space:pre;-webkit-text-stroke:0.22px;transform:scaleY(1.09);transform-origin:0 14.55px;color:#080808"><span style="color:#9e880d;">#include </span><span style="color:#067d17;font-weight:bold;">"texture_buffer_shader.h"</span></div>
<div style="position:absolute;left:0;top:90px;width:19.5px;text-align:right;font-family:'Liberation Mono',monospace;font-size:13.333px;line-height:22px;white-space:pre;color:#a2a2a2;letter-spacing:-0.6px">5</div>
<div style="position:absolute;left:0;top:112px;width:19.5px;text-align:right;font-family:'Liberation Mono',monospace;font-size:13.333px;line-height:22px;white-space:pre;color:#a2a2a2;letter-spacing:-0.6px">6</div>
<div style="position:absolute;left:64px;top:112px;font-family:'Liberation Mono',monospace;font-size:13.333px;line-height:22px;white-space:pre;-webkit-text-stroke:0.22px;transform:scaleY(1.09);transform-origin:0 14.55px;color:#080808"><span style="color:#000080;font-weight:bold;">class</span> <span style="color:#008080;">MyGame</span></div>
<div style="position:absolute;left:0;top:134px;width:19.5px;text-align:right;font-family:'Liberation Mono',monospace;font-size:13.333px;line-height:22px;white-space:pre;color:#a2a2a2;letter-spacing:-0.6px">7</div>
<div style="position:absolute;left:64px;top:134px;font-family:'Liberation Mono',monospace;font-size:13.333px;line-height:22px;white-space:pre;-webkit-text-stroke:0.22px;transform:scaleY(1.09);transform-origin:0 14.55px;color:#080808">{</div>
<div style="position:absolute;left:0;top:156px;width:19.5px;text-align:right;font-family:'Liberation Mono',monospace;font-size:13.333px;line-height:22px;white-space:pre;color:#a2a2a2;letter-spacing:-0.6px">8</div>
<div style="position:absolute;left:64px;top:156px;font-family:'Liberation Mono',monospace;font-size:13.333px;line-height:22px;white-space:pre;-webkit-text-stroke:0.22px;transform:scaleY(1.09);transform-origin:0 14.55px;color:#080808">    <span style="color:#8c8c8c;font-style:italic;">// constructor</span></div>
<div style="position:absolute;left:0;top:178px;width:19.5px;text-align:right;font-family:'Liberation Mono',monospace;font-size:13.333px;line-height:22px;white-space:pre;color:#a2a2a2;letter-spacing:-0.6px">9</div>
<div style="position:absolute;left:64px;top:178px;font-family:'Liberation Mono',monospace;font-size:13.333px;line-height:22px;white-space:pre;-webkit-text-stroke:0.22px;transform:scaleY(1.09);transform-origin:0 14.55px;color:#080808">    <span style="color:#000080;font-weight:bold;">public</span>: MyGame(<span style="color:#371f80;">AAssetManager</span>* pAssetManager);</div>
<div style="position:absolute;left:0;top:200px;width:19.5px;text-align:right;font-family:'Liberation Mono',monospace;font-size:13.333px;line-height:22px;white-space:pre;color:#a2a2a2;letter-spacing:-0.6px">10</div>
<div style="position:absolute;left:0;top:222px;width:19.5px;text-align:right;font-family:'Liberation Mono',monospace;font-size:13.333px;line-height:22px;white-space:pre;color:#a2a2a2;letter-spacing:-0.6px">11</div>
<div style="position:absolute;left:64px;top:222px;font-family:'Liberation Mono',monospace;font-size:13.333px;line-height:22px;white-space:pre;-webkit-text-stroke:0.22px;transform:scaleY(1.09);transform-origin:0 14.55px;color:#080808">    <span style="color:#8c8c8c;font-style:italic;">// my Game objects</span></div>
<div style="position:absolute;left:0;top:244px;width:19.5px;text-align:right;font-family:'Liberation Mono',monospace;font-size:13.333px;line-height:22px;white-space:pre;color:#a2a2a2;letter-spacing:-0.6px">12</div>
<div style="position:absolute;left:64px;top:244px;font-family:'Liberation Mono',monospace;font-size:13.333px;line-height:22px;white-space:pre;-webkit-text-stroke:0.22px;transform:scaleY(1.09);transform-origin:0 14.55px;color:#080808">    <span style="color:#000080;font-weight:bold;">protected</span>: <span style="color:#008080;">TextureImageOpenGL</span> <span style="color:#871094;">m_TextureImage_Hero</span>;</div>
<div style="position:absolute;left:0;top:266px;width:19.5px;text-align:right;font-family:'Liberation Mono',monospace;font-size:13.333px;line-height:22px;white-space:pre;color:#a2a2a2;letter-spacing:-0.6px">13</div>
<div style="position:absolute;left:64px;top:266px;font-family:'Liberation Mono',monospace;font-size:13.333px;line-height:22px;white-space:pre;-webkit-text-stroke:0.22px;transform:scaleY(1.09);transform-origin:0 14.55px;color:#080808">    <span style="color:#000080;font-weight:bold;">protected</span>: <span style="color:#008080;">TextureImageOpenGL</span> <span style="color:#871094;">m_TextureImage_Ghost</span>;</div>
<div style="position:absolute;left:0;top:288px;width:19.5px;text-align:right;font-family:'Liberation Mono',monospace;font-size:13.333px;line-height:22px;white-space:pre;color:#a2a2a2;letter-spacing:-0.6px">14</div>
<div style="position:absolute;left:64px;top:288px;font-family:'Liberation Mono',monospace;font-size:13.333px;line-height:22px;white-space:pre;-webkit-text-stroke:0.22px;transform:scaleY(1.09);transform-origin:0 14.55px;color:#080808">    <span style="color:#000080;font-weight:bold;">protected</span>: <span style="color:#008080;">BufferPointsOpenGL</span> <span style="color:#871094;">m_BufferPoints_Hero</span>;</div>
<div style="position:absolute;left:0;top:310px;width:19.5px;text-align:right;font-family:'Liberation Mono',monospace;font-size:13.333px;line-height:22px;white-space:pre;color:#a2a2a2;letter-spacing:-0.6px">15</div>
<div style="position:absolute;left:64px;top:310px;font-family:'Liberation Mono',monospace;font-size:13.333px;line-height:22px;white-space:pre;-webkit-text-stroke:0.22px;transform:scaleY(1.09);transform-origin:0 14.55px;color:#080808">    <span style="color:#000080;font-weight:bold;">protected</span>: <span style="color:#008080;">BufferPointsOpenGL</span> <span style="color:#871094;">m_BufferPoints_Ghost1</span>;</div>
<div style="position:absolute;left:0;top:332px;width:19.5px;text-align:right;font-family:'Liberation Mono',monospace;font-size:13.333px;line-height:22px;white-space:pre;color:#a2a2a2;letter-spacing:-0.6px">16</div>
<div style="position:absolute;left:64px;top:332px;font-family:'Liberation Mono',monospace;font-size:13.333px;line-height:22px;white-space:pre;-webkit-text-stroke:0.22px;transform:scaleY(1.09);transform-origin:0 14.55px;color:#080808">    <span style="color:#000080;font-weight:bold;">protected</span>: <span style="color:#008080;">BufferPointsOpenGL</span> <span style="color:#871094;">m_BufferPoints_Ghost2</span>;</div>
<div style="position:absolute;left:0;top:354px;width:19.5px;text-align:right;font-family:'Liberation Mono',monospace;font-size:13.333px;line-height:22px;white-space:pre;color:#a2a2a2;letter-spacing:-0.6px">17</div>
<div style="position:absolute;left:64px;top:354px;font-family:'Liberation Mono',monospace;font-size:13.333px;line-height:22px;white-space:pre;-webkit-text-stroke:0.22px;transform:scaleY(1.09);transform-origin:0 14.55px;color:#080808">    <span style="color:#000080;font-weight:bold;">protected</span>: <span style="color:#008080;">ShaderOpenGL</span> <span style="color:#871094;">m_ShaderOpenGL</span>;</div>
<div style="position:absolute;left:0;top:376px;width:19.5px;text-align:right;font-family:'Liberation Mono',monospace;font-size:13.333px;line-height:22px;white-space:pre;color:#a2a2a2;letter-spacing:-0.6px">18</div>
<div style="position:absolute;left:0;top:398px;width:19.5px;text-align:right;font-family:'Liberation Mono',monospace;font-size:13.333px;line-height:22px;white-space:pre;color:#a2a2a2;letter-spacing:-0.6px">19</div>
<div style="position:absolute;left:64px;top:398px;font-family:'Liberation Mono',monospace;font-size:13.333px;line-height:22px;white-space:pre;-webkit-text-stroke:0.22px;transform:scaleY(1.09);transform-origin:0 14.55px;color:#080808">    <span style="color:#8c8c8c;font-style:italic;">// fields</span></div>
<div style="position:absolute;left:0;top:420px;width:19.5px;text-align:right;font-family:'Liberation Mono',monospace;font-size:13.333px;line-height:22px;white-space:pre;color:#a2a2a2;letter-spacing:-0.6px">20</div>
<div style="position:absolute;left:64px;top:420px;font-family:'Liberation Mono',monospace;font-size:13.333px;line-height:22px;white-space:pre;-webkit-text-stroke:0.22px;transform:scaleY(1.09);transform-origin:0 14.55px;color:#080808">    <span style="color:#000080;font-weight:bold;">protected</span>: <span style="color:#371f80;">AAssetManager</span>* <span style="color:#871094;">m_pAssetManager</span>;</div>
<div style="position:absolute;left:0;top:442px;width:19.5px;text-align:right;font-family:'Liberation Mono',monospace;font-size:13.333px;line-height:22px;white-space:pre;color:#a2a2a2;letter-spacing:-0.6px">21</div>
<div style="position:absolute;left:64px;top:442px;font-family:'Liberation Mono',monospace;font-size:13.333px;line-height:22px;white-space:pre;-webkit-text-stroke:0.22px;transform:scaleY(1.09);transform-origin:0 14.55px;color:#080808">    <span style="color:#000080;font-weight:bold;">protected</span>: <span style="color:#371f80;">EGLDisplay</span> <span style="color:#871094;">m_Display</span> = <span style="color:#1f542e;font-weight:bold;">EGL_NO_DISPLAY</span>;</div>
<div style="position:absolute;left:0;top:464px;width:19.5px;text-align:right;font-family:'Liberation Mono',monospace;font-size:13.333px;line-height:22px;white-space:pre;color:#a2a2a2;letter-spacing:-0.6px">22</div>
<div style="position:absolute;left:64px;top:464px;font-family:'Liberation Mono',monospace;font-size:13.333px;line-height:22px;white-space:pre;-webkit-text-stroke:0.22px;transform:scaleY(1.09);transform-origin:0 14.55px;color:#080808">    <span style="color:#000080;font-weight:bold;">protected</span>: <span style="color:#371f80;">EGLSurface</span> <span style="color:#871094;">m_Surface</span> = <span style="color:#1f542e;font-weight:bold;">EGL_NO_SURFACE</span>;</div>
<div style="position:absolute;left:0;top:486px;width:19.5px;text-align:right;font-family:'Liberation Mono',monospace;font-size:13.333px;line-height:22px;white-space:pre;color:#a2a2a2;letter-spacing:-0.6px">23</div>
<div style="position:absolute;left:64px;top:486px;font-family:'Liberation Mono',monospace;font-size:13.333px;line-height:22px;white-space:pre;-webkit-text-stroke:0.22px;transform:scaleY(1.09);transform-origin:0 14.55px;color:#080808">    <span style="color:#000080;font-weight:bold;">protected</span>: <span style="color:#371f80;">EGLContext</span> <span style="color:#871094;">m_Context</span> = <span style="color:#1f542e;font-weight:bold;">EGL_NO_CONTEXT</span>;</div>
<div style="position:absolute;left:0;top:508px;width:19.5px;text-align:right;font-family:'Liberation Mono',monospace;font-size:13.333px;line-height:22px;white-space:pre;color:#a2a2a2;letter-spacing:-0.6px">24</div>
<div style="position:absolute;left:64px;top:508px;font-family:'Liberation Mono',monospace;font-size:13.333px;line-height:22px;white-space:pre;-webkit-text-stroke:0.22px;transform:scaleY(1.09);transform-origin:0 14.55px;color:#080808">    <span style="color:#000080;font-weight:bold;">protected</span>: <span style="color:#371f80;">EGLConfig</span> <span style="color:#871094;">m_configOpenGL</span> = <span style="color:#000080;font-weight:bold;">nullptr</span>;</div>
<div style="position:absolute;left:703px;top:27px;width:10px;height:237px;background:rgba(205,205,205,0.65)"></div>
<div style="position:absolute;left:695px;top:126px;width:2px;height:5px;background:#a9bdf0"></div>
<div style="position:absolute;left:695px;top:156px;width:2px;height:5px;background:#bdbdbd"></div>
<div style="position:absolute;left:695px;top:187px;width:2px;height:5px;background:#bdbdbd"></div>
</div>
<svg style="position:absolute;left:355.5px;top:367.5px;" width="8" height="9" viewBox="0 0 8 9"><path d="M0 0 L8 4.5 L0 9 Z" fill="#a8a8a8"/></svg>
<svg style="position:absolute;left:355.5px;top:433.5px;" width="8" height="9" viewBox="0 0 8 9"><path d="M0 0 L8 4.5 L0 9 Z" fill="#a8a8a8"/></svg>
<svg style="position:absolute;left:360px;top:93px;" width="9" height="10" viewBox="0 0 9 10"><path d="M0.5 0.5 H8.5 V6 L4.5 9.5 L0.5 6 Z" fill="#fff" stroke="#b5b5b5" stroke-width="1"/><path d="M2.5 4.5 H6.5" stroke="#b5b5b5" stroke-width="1"/></svg>
<svg style="position:absolute;left:360px;top:158.5px;" width="9" height="10" viewBox="0 0 9 10"><path d="M0.5 9.5 H8.5 V4 L4.5 0.5 L0.5 4 Z" fill="#fff" stroke="#b5b5b5" stroke-width="1"/><path d="M2.5 5.5 H6.5" stroke="#b5b5b5" stroke-width="1"/></svg>
<svg style="position:absolute;left:360px;top:203px;" width="9" height="10" viewBox="0 0 9 10"><path d="M0.5 0.5 H8.5 V6 L4.5 9.5 L0.5 6 Z" fill="#fff" stroke="#b5b5b5" stroke-width="1"/><path d="M2.5 4.5 H6.5" stroke="#b5b5b5" stroke-width="1"/></svg>
<svg style="position:absolute;left:336px;top:266px;" width="13" height="13" viewBox="0 0 13 13"><path d="M3 3.5 H12 M3 3.5 L6 0.8 M3 3.5 L6 6.2" stroke="#59a869" stroke-width="1.4" fill="none"/><path d="M1 9.5 H10 M10 9.5 L7 6.8 M10 9.5 L7 12.2" stroke="#db5860" stroke-width="1.4" fill="none"/></svg>
<svg style="position:absolute;left:949px;top:93px;" width="13" height="12" viewBox="0 0 13 12"><path d="M6.5 0.5 L12.7 11.5 H0.3 Z" fill="#f4c20d"/><path d="M6.5 4 V8" stroke="#fff" stroke-width="1.5"/><circle cx="6.5" cy="9.8" r="0.9" fill="#fff"/></svg>
<div style="position:absolute;left:965.5px;top:90.84px;line-height:18px;font-size:12px;font-family:'Liberation Sans',sans-serif;color:#6e6e6e;white-space:pre;">2</div>
<svg style="position:absolute;left:981px;top:94px;" width="10" height="8" viewBox="0 0 10 8"><path d="M1 6 L5 2 L9 6" stroke="#6e6e6e" stroke-width="1.3" fill="none"/></svg>
<svg style="position:absolute;left:1002px;top:95px;" width="10" height="8" viewBox="0 0 10 8"><path d="M1 2 L5 6 L9 2" stroke="#6e6e6e" stroke-width="1.3" fill="none"/></svg>
<div style="position:absolute;left:306px;top:606px;width:713px;height:22px;background:#f0f0f0;"></div>
<div style="position:absolute;left:306px;top:605px;width:713px;height:1px;background:#dedede;"></div>
<div style="position:absolute;left:317px;top:610px;width:14px;height:14px;background:#d5c5f7;border-radius:3px"></div>
<div style="position:absolute;left:320.3px;top:611.35px;line-height:13px;font-size:8.5px;font-family:'Liberation Sans',sans-serif;color:#4d4d5c;white-space:pre;font-weight:bold;">S</div>
<div style="position:absolute;left:336.5px;top:608.84px;line-height:18px;font-size:12px;font-family:'Liberation Sans',sans-serif;color:#4d4d4d;white-space:pre;letter-spacing:-0.146px;">MyGame</div>
<div style="position:absolute;left:1019px;top:59px;width:1px;height:570px;background:#d1d1d1;"></div>
<div style="position:absolute;left:1020px;top:59px;width:387px;height:570px;background:#f5f5f5;"></div>
<div style="position:absolute;left:1020px;top:59px;width:387px;height:26px;background:#f2f2f2;"></div>
<div style="position:absolute;left:1020px;top:85px;width:387px;height:1px;background:#d1d1d1;"></div>
<div style="position:absolute;left:1020px;top:86px;width:387px;height:28px;background:#f2f2f2;"></div>
<div style="position:absolute;left:1020px;top:114px;width:387px;height:1px;background:#d1d1d1;"></div>
<svg width="0" height="0" style="position:absolute"><defs><filter id="sb" x="0" y="0" width="100%" height="100%"><feGaussianBlur stdDeviation="0.45"/></filter><filter id="sb2" x="0" y="0" width="100%" height="100%"><feGaussianBlur stdDeviation="0.6"/></filter></defs></svg>
<div style="position:absolute;left:1026px;top:64.24px;line-height:18px;font-size:12px;font-family:'Liberation Sans',sans-serif;color:#000;white-space:pre;letter-spacing:-0.253px;">Running Devices:</div>
<div style="position:absolute;left:1124px;top:83px;width:137px;height:2px;background:#9ca7b8;"></div>
<svg style="position:absolute;left:1138px;top:64px;" width="16" height="16" viewBox="0 0 16 16"><rect x="2.2" y="2.6" width="7.8" height="11" rx="1.2" stroke="#6e6e6e" stroke-width="1.3" fill="none"/><rect x="8" y="9" width="7" height="6" fill="#f2f2f2"/><rect x="9" y="10" width="5" height="4" stroke="#6e6e6e" stroke-width="1" fill="#f2f2f2"/><circle cx="12.5" cy="13.2" r="2.4" fill="#2dbd4e"/></svg>
<div style="position:absolute;left:1156px;top:64.24px;line-height:18px;font-size:12px;font-family:'Liberation Sans',sans-serif;color:#000;white-space:pre;letter-spacing:-0.337px;">Nexus 5 API 27</div>
<svg style="position:absolute;left:1241px;top:68px;" width="8" height="8" viewBox="0 0 8 8"><path d="M0.8 0.8 L7.2 7.2 M7.2 0.8 L0.8 7.2" stroke="#b0b0b0" stroke-width="1"/></svg>
<svg style="position:absolute;left:1328px;top:65px;" width="13" height="12" viewBox="0 0 13 12"><rect x="0.7" y="0.7" width="11.6" height="10.6" stroke="#6e6e6e" stroke-width="1.4" fill="none"/><rect x="0.7" y="0.7" width="11.6" height="3" fill="#6e6e6e"/></svg>
<div style="position:absolute;left:1351px;top:63px;width:1px;height:18px;background:#d1d1d1;"></div>
<svg style="position:absolute;left:1360px;top:64px;" width="16" height="16" viewBox="0 0 16 16"><path d="M6.74 3.26 L6.90 1.59 L9.10 1.59 L9.26 3.26 L10.46 3.76 L11.75 2.69 L13.31 4.25 L12.24 5.54 L12.74 6.74 L14.41 6.90 L14.41 9.10 L12.74 9.26 L12.24 10.46 L13.31 11.75 L11.75 13.31 L10.46 12.24 L9.26 12.74 L9.10 14.41 L6.90 14.41 L6.74 12.74 L5.54 12.24 L4.25 13.31 L2.69 11.75 L3.76 10.46 L3.26 9.26 L1.59 9.10 L1.59 6.90 L3.26 6.74 L3.76 5.54 L2.69 4.25 L4.25 2.69 L5.54 3.76 Z" fill="#6e6e6e" stroke="#6e6e6e" stroke-width="0.6" stroke-linejoin="round"/><circle cx="8" cy="8" r="2.1" fill="#f2f2f2"/></svg>
<div style="position:absolute;left:1388px;top:71px;width:13px;height:2px;background:#6e6e6e;"></div>
<svg style="position:absolute;left:1025px;top:92px;" width="16" height="16" viewBox="0 0 16 16"><path d="M4.8 3.8 A5.5 5.5 0 1 0 11.2 3.8" stroke="#6e6e6e" stroke-width="1.9" fill="none"/><path d="M8 1.2 V8" stroke="#6e6e6e" stroke-width="1.9"/></svg>
<svg style="position:absolute;left:1047px;top:92px;" width="17" height="16" viewBox="0 0 17 16"><path d="M1 5.7 H4 L8 2 V14 L4 10.3 H1 Z" fill="#6e6e6e"/><path d="M10 5 A4 4 0 0 1 10 11 M11.8 2.6 A7 7 0 0 1 11.8 13.4" stroke="#6e6e6e" stroke-width="1.4" fill="none"/></svg>
<svg style="position:absolute;left:1070px;top:92px;" width="16" height="16" viewBox="0 0 16 16"><path d="M1 5.7 H4 L8 2 V14 L4 10.3 H1 Z" fill="#6e6e6e"/><path d="M10 5 A4 4 0 0 1 10 11" stroke="#6e6e6e" stroke-width="1.4" fill="none"/></svg>
<svg style="position:absolute;left:1092px;top:92px;" width="17" height="16" viewBox="0 0 17 16"><rect x="1.6" y="3.6" width="6.4" height="9.8" rx="1" stroke="#6e6e6e" stroke-width="1.5" fill="none"/><path d="M11.2 3.4 C14.6 5.4 14.8 10.4 11.4 13.2" stroke="#389fd6" stroke-width="2" fill="none"/><path d="M9.6 1.4 L14 2.6 L10.8 6 Z" fill="#389fd6"/></svg>
<svg style="position:absolute;left:1118px;top:92px;" width="17" height="16" viewBox="0 0 17 16"><rect x="9" y="3.6" width="6.4" height="9.8" rx="1" stroke="#6e6e6e" stroke-width="1.5" fill="none"/><path d="M5.8 3.4 C2.4 5.4 2.2 10.4 5.6 13.2" stroke="#389fd6" stroke-width="2" fill="none"/><path d="M7.4 1.4 L3 2.6 L6.2 6 Z" fill="#389fd6"/></svg>
<svg style="position:absolute;left:1147px;top:95px;" width="11" height="11" viewBox="0 0 11 11"><path d="M10 0.5 V10.5 L1 5.5 Z" fill="#6e6e6e"/></svg>
<svg style="position:absolute;left:1174px;top:96px;" width="9" height="9" viewBox="0 0 9 9"><circle cx="4.5" cy="4.5" r="4.3" fill="#6e6e6e"/></svg>
<div style="position:absolute;left:1201px;top:96px;width:8px;height:8px;background:#6e6e6e;"></div>
<svg style="position:absolute;left:1222px;top:92px;" width="17" height="16" viewBox="0 0 17 16"><path d="M1 4.5 H4.5 L6 2.3 H11 L12.5 4.5 H16 V14 H1 Z" fill="#6e6e6e"/><circle cx="8.5" cy="9" r="3" stroke="#f2f2f2" stroke-width="1.3" fill="none"/></svg>
<svg style="position:absolute;left:1248px;top:92px;" width="18" height="16" viewBox="0 0 18 16"><rect x="1" y="3.5" width="11" height="9.5" rx="1" fill="#6e6e6e"/><path d="M12 8.2 L17 4.3 V12.2 Z" fill="#6e6e6e"/></svg>
<svg style="position:absolute;left:1274px;top:92px;" width="17" height="16" viewBox="0 0 17 16"><path d="M3.2 5.2 A6.2 6.2 0 1 1 2.5 10" stroke="#6e6e6e" stroke-width="1.5" fill="none"/><path d="M1 2 L1.6 6.8 L6.2 5.6 Z" fill="#6e6e6e"/><path d="M8.7 4.8 V8.6 H11.7" stroke="#6e6e6e" stroke-width="1.4" fill="none"/></svg>
<div style="position:absolute;left:1307.6px;top:94.0px;width:2.8px;height:2.8px;background:#5e5e5e;border-radius:1.4px;"></div>
<div style="position:absolute;left:1307.6px;top:98.6px;width:2.8px;height:2.8px;background:#5e5e5e;border-radius:1.4px;"></div>
<div style="position:absolute;left:1307.6px;top:103.2px;width:2.8px;height:2.8px;background:#5e5e5e;border-radius:1.4px;"></div>
<svg style="position:absolute;left:1084px;top:115px;" width="258" height="512" viewBox="0 0 258 512"><path d="M3 22 C3 12 8 8 16 7 C70 0 188 0 242 7 C250 8 255 12 255 22 V485 C255 496 249 501 240 503 C190 512 68 512 18 503 C9 501 3 496 3 485 Z" fill="#181818" stroke="#5a5a5a" stroke-width="1.3"/><rect x="0.5" y="98" width="3" height="62" rx="1.2" fill="#2b2b2b"/><rect x="254.5" y="65" width="3" height="33" rx="1.2" fill="#2b2b2b"/><circle cx="42" cy="26" r="1.8" fill="#2a3a6a"/><circle cx="42" cy="26" r="0.8" fill="#7a8ad0"/><circle cx="128" cy="26" r="5" fill="#2a2a2a" stroke="#444" stroke-width="0.8"/><path d="M123.5 26 H132.5 M128 21.5 V30.5" stroke="#444" stroke-width="0.6"/></svg>
<div style="position:absolute;left:1097px;top:157px;width:232px;height:414px;background:#b7de8b;"></div>
<div style="position:absolute;left:1105px;top:161px;width:7px;height:8px;background:rgba(255,255,255,0.92);border-radius:1px"></div>
<div style="position:absolute;left:1106.5px;top:161.42px;line-height:9px;font-size:6px;font-family:'Liberation Sans',sans-serif;color:#b7de8b;white-space:pre;font-weight:bold;">A</div>
<div style="position:absolute;left:1120px;top:160.5px;width:9px;height:9px;background:rgba(255,255,255,0.55);border-radius:5px"></div>
<svg style="position:absolute;left:1135.5px;top:160.5px;" width="8" height="9" viewBox="0 0 8 9"><path d="M2.5 0 H8 V9 H0 V2.5 Z" fill="rgba(255,255,255,0.92)"/></svg>
<svg style="position:absolute;left:1267.5px;top:160.5px;" width="12" height="9" viewBox="0 0 12 9"><path d="M0 2.5 C3.5 -0.8 8.5 -0.8 12 2.5 L6 9 Z" fill="rgba(255,255,255,0.92)"/></svg>
<svg style="position:absolute;left:1281px;top:160.5px;" width="9" height="9" viewBox="0 0 9 9"><path d="M9 0 V9 H0 Z" fill="rgba(255,255,255,0.5)"/><path d="M5.5 3.5 V9 H0 Z" fill="rgba(255,255,255,0.95)"/></svg>
<svg style="position:absolute;left:1296px;top:160px;" width="6" height="10" viewBox="0 0 6 10"><path d="M1.5 0 H4.5 V1 H6 V10 H0 V1 H1.5 Z" fill="rgba(255,255,255,0.92)"/></svg>
<div style="position:absolute;left:1306px;top:160.23px;line-height:12px;font-size:8px;font-family:'Liberation Sans',sans-serif;color:#fff;white-space:pre;font-weight:bold;letter-spacing:0.372px;">2:59</div>
<svg style="position:absolute;left:1151px;top:551px;" width="8" height="9" viewBox="0 0 8 9"><path d="M8 0 V9 L0 4.5 Z" fill="rgba(255,255,255,0.6)"/></svg>
<svg style="position:absolute;left:1206.5px;top:549px;" width="13" height="13" viewBox="0 0 13 13"><circle cx="6.5" cy="6.5" r="4.3" fill="rgba(255,255,255,0.6)"/><circle cx="6.5" cy="6.5" r="5.8" stroke="rgba(255,255,255,0.6)" stroke-width="0.8" fill="none"/></svg>
<div style="position:absolute;left:1267px;top:551.5px;width:8px;height:8px;background:rgba(255,255,255,0.6);"></div>
<svg style="position:absolute;left:1213px;top:240px;" width="46" height="83" viewBox="0 0 46 83"><g filter="url(#sb)"><rect width="46" height="83" fill="#fff"/><path d="M5.5 78.6 C2 62 0.5 48 1.6 34 C2.8 14 10 1 21 0.8 C31 0.8 38.5 12 40.5 28 C42.5 42 41 60 45.2 75.5 L36.6 64.6 L35.9 76.3 L30.6 63.4 L28.9 76.3 L24.2 65.8 L21.8 82 L16.6 65.8 L12.5 76.3 L8.4 65.8 Z" fill="#d3d5d7" stroke="#111" stroke-width="1"/><path d="M36 8 C39 18 40 30 39.5 45" stroke="#f4f4f4" stroke-width="1.6" fill="none"/><path d="M5.5 78.6 L8.4 65.8 L12.5 76.3 L16.6 65.8 L21.8 82 L24.2 65.8 L28.9 76.3 L30.6 63.4 L35.9 76.3 L36.6 64.6 L45.2 75.5" stroke="#111" stroke-width="2" fill="none" stroke-linejoin="miter"/><path d="M12.5 76.3 L16.6 65.8 L17.8 70 Z M21.8 82 L24.2 65.8 L25.6 71 Z M28.9 76.3 L30.6 63.4 L32 68.5 Z M35.9 76.3 L36.6 64.6 L39.5 69.5 Z" fill="#111"/><ellipse cx="8.4" cy="41.2" rx="2.9" ry="9.3" fill="#111"/><ellipse cx="8.6" cy="41.5" rx="1.1" ry="5" fill="#d9dadc"/><ellipse cx="22.4" cy="40.7" rx="5.8" ry="11" fill="#111"/><ellipse cx="20.2" cy="42" rx="1.7" ry="4.6" fill="#fff" transform="rotate(-10 20.2 42)"/><path d="M4.6 29.5 C5.5 24 9 22.5 11 28.6" stroke="#111" stroke-width="2" fill="none"/><path d="M15.8 28.8 C17.5 21.5 23.5 20.5 27.3 26.8" stroke="#111" stroke-width="2.8" fill="none"/></g></svg>
<svg style="position:absolute;left:1283px;top:405px;" width="46" height="83" viewBox="0 0 46 83"><g filter="url(#sb)"><rect width="46" height="83" fill="#fff"/><path d="M5.5 78.6 C2 62 0.5 48 1.6 34 C2.8 14 10 1 21 0.8 C31 0.8 38.5 12 40.5 28 C42.5 42 41 60 45.2 75.5 L36.6 64.6 L35.9 76.3 L30.6 63.4 L28.9 76.3 L24.2 65.8 L21.8 82 L16.6 65.8 L12.5 76.3 L8.4 65.8 Z" fill="#d3d5d7" stroke="#111" stroke-width="1"/><path d="M36 8 C39 18 40 30 39.5 45" stroke="#f4f4f4" stroke-width="1.6" fill="none"/><path d="M5.5 78.6 L8.4 65.8 L12.5 76.3 L16.6 65.8 L21.8 82 L24.2 65.8 L28.9 76.3 L30.6 63.4 L35.9 76.3 L36.6 64.6 L45.2 75.5" stroke="#111" stroke-width="2" fill="none" stroke-linejoin="miter"/><path d="M12.5 76.3 L16.6 65.8 L17.8 70 Z M21.8 82 L24.2 65.8 L25.6 71 Z M28.9 76.3 L30.6 63.4 L32 68.5 Z M35.9 76.3 L36.6 64.6 L39.5 69.5 Z" fill="#111"/><ellipse cx="8.4" cy="41.2" rx="2.9" ry="9.3" fill="#111"/><ellipse cx="8.6" cy="41.5" rx="1.1" ry="5" fill="#d9dadc"/><ellipse cx="22.4" cy="40.7" rx="5.8" ry="11" fill="#111"/><ellipse cx="20.2" cy="42" rx="1.7" ry="4.6" fill="#fff" transform="rotate(-10 20.2 42)"/><path d="M4.6 29.5 C5.5 24 9 22.5 11 28.6" stroke="#111" stroke-width="2" fill="none"/><path d="M15.8 28.8 C17.5 21.5 23.5 20.5 27.3 26.8" stroke="#111" stroke-width="2.8" fill="none"/></g></svg>
<svg style="position:absolute;left:1097px;top:364px;" width="93" height="166" viewBox="0 0 93 166"><g filter="url(#sb2)"><rect width="93" height="166" fill="#fff"/><path d="M25 66 C20 80 15 95 14.5 108.5 L17.5 118 L19.5 136 C21 143 23 146 25 147.5 C34 150 44 150 52.5 148.5 C62 147 72 144 74.6 139.5 C76 134 76 129 75.6 124 L70 110 L76.6 91 L67.8 91 L58 112 L40 82 L33 64 Z" fill="#4b1fa3" stroke="#2d1070" stroke-width="1"/><path d="M14.5 108.5 C20 112 28 112 35 108 L35 114.5 C28 118 22 119 17.5 118 Z" fill="#2d1070" opacity="0.7"/><path d="M54.3 120 L64 137.6 L56 141 C54 134 53.5 127 54.3 120 Z" fill="#8468c8"/><path d="M27 70 C24 84 24 98 27 108" stroke="#6a3fc4" stroke-width="1.6" fill="none" opacity="0.8"/><path d="M67.8 91 L76.6 91 L74.6 108.5 L70 118 L63 108 Z" fill="#4b1fa3" stroke="#2d1070" stroke-width="0.8"/><ellipse cx="23" cy="52.5" rx="3.6" ry="5" fill="#f7c9a0" stroke="#7a4a30" stroke-width="0.6"/><path d="M30 44 L48 38 L70 36 L71 50 C75 51 76.5 54 74 56.5 C70 58 64 57 62 58 L40 64 L37 58 L31 58 Z" fill="#f7c9a0" stroke="#7a4a30" stroke-width="0.7"/><path d="M27 47 C26 56 27 62 29 66 C31 74 35 79 39 84 C43 92 48 98 52.5 104.5 C56 110 55 118 58 122 C62 128 71 128 73 122 C74.5 118 74.8 116 74.6 114.3 C73 119 69 121 66.5 118 C64 114 65 106 66 100.8 C68 94 69 88 67.8 81.4 L62 62 L42 62 L36 56 L32 47 Z" fill="#d7dbde" stroke="#8a9096" stroke-width="0.8"/><path d="M40 70 C44 80 50 90 56 100 M50 74 C52 86 58 96 60 110" stroke="#eef0f2" stroke-width="1.6" fill="none"/><path d="M59.5 57.5 C52 56 45 62 44.8 71 C44.6 74 45 76 45.6 77.5 L48.5 73.5 L50.5 79 L53.5 73 L56.5 77 C58 71 60.5 66.5 63 65.5 C67 66 71.5 69.5 74 74 L76 77.5 L77.5 73 L80 75.5 C81 70 80 64 76 61 C72 58 66 57 59.5 57.5 Z" fill="#f1f2f4" stroke="#6c7178" stroke-width="0.9"/><ellipse cx="55.2" cy="46.5" rx="3.7" ry="5.2" fill="#fff" stroke="#7a4a30" stroke-width="1"/><ellipse cx="56" cy="47.8" rx="1.7" ry="2.2" fill="#2a2a2a"/><ellipse cx="66.9" cy="45.3" rx="3.3" ry="4.8" fill="#fff" stroke="#7a4a30" stroke-width="1"/><ellipse cx="68" cy="46.8" rx="1.6" ry="2.1" fill="#2a2a2a"/><path d="M32 1 L58 19.4 L75.6 19.4 L64 33 L46.5 37 L11.6 45.5 L21 30.5 L9 35 L4.8 45.5 L1 23.3 L7.8 17.4 L21.3 9.7 Z" fill="#4b1fa3" stroke="#2d1070" stroke-width="0.8" stroke-linejoin="round"/><path d="M11.6 45.5 L46.5 37 L64 33 L75.6 19.4 C70 27 60 31 46 33 Z" fill="#2d1070" opacity="0.75"/><path d="M9 35 L21 30.5 L25 22" stroke="#2d1070" stroke-width="1.2" fill="none"/><path d="M45.5 36 C47 29.5 55 29 58.5 34.5 L57 37.5 C53 35 49 35.5 45.5 36 Z" fill="#f4f5f6" stroke="#9aa0a6" stroke-width="0.5"/><path d="M62 34 C64 29 70 27.5 73 30 L70 36 C67 34.5 64.5 34.5 62 34 Z" fill="#f4f5f6" stroke="#9aa0a6" stroke-width="0.5"/><path d="M41 16.9 L41.7 18.4 L43.1 18.5 L42 19.5 L42.4 21 L41 20.1 L39.6 21 L40 19.5 L38.9 18.5 L40.3 18.4 Z" fill="#dba05c"/><path d="M13.5 22.9 L14.2 24.4 L15.6 24.5 L14.5 25.5 L14.9 27 L13.5 26.1 L12.1 27 L12.5 25.5 L11.4 24.5 L12.8 24.4 Z" fill="#dba05c"/><path d="M20 10.9 L20.7 12.4 L22.1 12.5 L21 13.5 L21.4 15 L20 14.1 L18.6 15 L19 13.5 L17.9 12.5 L19.3 12.4 Z" fill="#dba05c"/><path d="M65 18.9 L65.7 20.4 L67.1 20.5 L66 21.5 L66.4 23 L65 22.1 L63.6 23 L64 21.5 L62.9 20.5 L64.3 20.4 Z" fill="#dba05c"/><path d="M28 34.4 L28.7 35.9 L30.1 36.0 L29 37.0 L29.4 38.5 L28 37.6 L26.6 38.5 L27 37.0 L25.9 36.0 L27.3 35.9 Z" fill="#dba05c"/><path d="M20.5 89.9 L21.2 91.4 L22.6 91.5 L21.5 92.5 L21.9 94 L20.5 93.1 L19.1 94 L19.5 92.5 L18.4 91.5 L19.8 91.4 Z" fill="#dba05c"/><path d="M25 96.9 L25.7 98.4 L27.1 98.5 L26 99.5 L26.4 101 L25 100.1 L23.6 101 L24 99.5 L22.9 98.5 L24.3 98.4 Z" fill="#dba05c"/><path d="M33 97.9 L33.7 99.4 L35.1 99.5 L34 100.5 L34.4 102 L33 101.1 L31.6 102 L32 100.5 L30.9 99.5 L32.3 99.4 Z" fill="#dba05c"/><path d="M45 104.9 L45.7 106.4 L47.1 106.5 L46 107.5 L46.4 109 L45 108.1 L43.6 109 L44 107.5 L42.9 106.5 L44.3 106.4 Z" fill="#dba05c"/><path d="M35 115.9 L35.7 117.4 L37.1 117.5 L36 118.5 L36.4 120 L35 119.1 L33.6 120 L34 118.5 L32.9 117.5 L34.3 117.4 Z" fill="#dba05c"/><path d="M44.5 124.9 L45.2 126.4 L46.6 126.5 L45.5 127.5 L45.9 129 L44.5 128.1 L43.1 129 L43.5 127.5 L42.4 126.5 L43.8 126.4 Z" fill="#dba05c"/><path d="M38 136.9 L38.7 138.4 L40.1 138.5 L39 139.5 L39.4 141 L38 140.1 L36.6 141 L37 139.5 L35.9 138.5 L37.3 138.4 Z" fill="#dba05c"/><path d="M46 137.4 L46.7 138.9 L48.1 139.0 L47 140.0 L47.4 141.5 L46 140.6 L44.6 141.5 L45 140.0 L43.9 139.0 L45.3 138.9 Z" fill="#dba05c"/><path d="M17.5 108.9 L18.2 110.4 L19.6 110.5 L18.5 111.5 L18.9 113 L17.5 112.1 L16.1 113 L16.5 111.5 L15.4 110.5 L16.8 110.4 Z" fill="#dba05c"/><path d="M30 71.9 L30.7 73.4 L32.1 73.5 L31 74.5 L31.4 76 L30 75.1 L28.6 76 L29 74.5 L27.9 73.5 L29.3 73.4 Z" fill="#dba05c"/><path d="M81.6 36 C80.6 60 82.6 100 81.8 125 C81.4 140 82.4 150 82.4 155.5 L86.2 156 C86.6 140 84.8 120 85.6 100 C86.4 80 84.8 60 85.6 36 Z" fill="#bf6a2c" stroke="#7a3e12" stroke-width="0.7"/><path d="M83.5 40 C80 38 77 33 79 28 C81 24 86 24 89 27" stroke="#bf6a2c" stroke-width="2.6" fill="none"/><circle cx="86.5" cy="28.5" r="6.2" fill="#b93ed6"/><circle cx="85" cy="25.5" r="2.8" fill="#ecaef6"/><path d="M83.5 40 C80 38 77 33 79 28" stroke="#bf6a2c" stroke-width="2.2" fill="none"/><path d="M20.3 119 C22 116.5 29 116.5 32.5 120 C34.5 126 33 133 28 135.7 C24 136 21 130 20.3 119 Z" fill="#f7c9a0" stroke="#7a4a30" stroke-width="0.7"/><path d="M25 128 C28 127 30 128 31 131" stroke="#7a4a30" stroke-width="0.6" fill="none"/><path d="M77 96 C80 93.5 86 94 87.2 97 L87.2 106 C85 109 79 109 76.8 106 Z" fill="#f7c9a0" stroke="#7a4a30" stroke-width="0.7"/><path d="M78 99 H87 M78 102.5 H87" stroke="#7a4a30" stroke-width="0.5"/><rect x="36" y="148" width="4" height="8" fill="#f7c9a0"/><rect x="45.5" y="148" width="4" height="8" fill="#f7c9a0"/><path d="M32 163.5 C31 158 36 154.5 44 155.5 C50 156.5 56 157 60 154 C63 151.5 62.5 148 65.5 144 C69.5 150 68 159 61 163 C52 165 40 165 32 163.5 Z" fill="#4b1fa3" stroke="#2d1070" stroke-width="0.8"/></g></svg>
<div style="position:absolute;left:1362px;top:499px;width:26px;height:106px;background:#fff;border:1px solid #c9c9c9;border-radius:4px"></div>
<svg style="position:absolute;left:1370px;top:508px;" width="12" height="12" viewBox="0 0 12 12"><path d="M6 1 V11 M1 6 H11" stroke="#6e6e6e" stroke-width="1.7"/></svg>
<div style="position:absolute;left:1371px;top:539px;width:10.5px;height:2px;background:#c9c9c9;"></div>
<div style="position:absolute;left:1369px;top:558.36px;line-height:16px;font-size:10.5px;font-family:'Liberation Sans',sans-serif;color:#3a3a3a;white-space:pre;font-weight:bold;letter-spacing:-0.559px;">1:1</div>
<svg style="position:absolute;left:1369px;top:586.5px;" width="14" height="12" viewBox="0 0 14 12"><rect x="0.7" y="0.7" width="12.6" height="10.6" stroke="#c4c4c4" stroke-width="1.2" fill="none"/><path d="M3 5.5 V3 H6 M11 6.5 V9 H8" stroke="#c4c4c4" stroke-width="1.1" fill="none"/></svg>
<div style="position:absolute;left:1408px;top:59px;width:21px;height:753px;background:#f2f2f2;"></div>
<div style="position:absolute;left:1407px;top:59px;width:1px;height:753px;background:#d1d1d1;"></div>
<svg style="position:absolute;left:1412px;top:67px;" width="13" height="14" viewBox="0 0 15 16"><path d="M7 1.5 C10 1.5 11.5 4 11.5 7 V10 L13 12 H1 L2.5 10 V7 C2.5 4 4 1.5 7 1.5 Z" fill="#6e6e6e"/><path d="M5.5 13 H8.5 C8.5 15 5.5 15 5.5 13 Z" fill="#6e6e6e"/><circle cx="12" cy="3.2" r="2.7" fill="#389fd6" stroke="#f2f2f2" stroke-width="0.8"/></svg>
<div style="position:absolute;left:1425.0px;top:88px;line-height:16px;height:16px;font-size:12px;color:#1c1c1c;white-space:pre;transform-origin:0 0;transform:rotate(90deg);letter-spacing:-0.374px;">Notifications</div>
<svg style="position:absolute;left:1412px;top:176px;" width="14" height="16" viewBox="0 0 14 16"><rect x="2" y="2" width="7.2" height="10.2" rx="1.2" stroke="#666" stroke-width="1.6" fill="none"/><rect x="2" y="10.2" width="4" height="2" fill="#666"/><rect x="4.4" y="4.2" width="9" height="11" fill="#f2f2f2"/><rect x="6" y="5.8" width="5.4" height="7.6" rx="1.2" stroke="#666" stroke-width="1.6" fill="#f2f2f2"/><rect x="6" y="11.4" width="5.4" height="2" fill="#666"/><circle cx="8.7" cy="12.4" r="0.6" fill="#f2f2f2"/></svg>
<div style="position:absolute;left:1425.0px;top:194.2px;line-height:16px;height:16px;font-size:12px;color:#1c1c1c;white-space:pre;transform-origin:0 0;transform:rotate(90deg);letter-spacing:-0.527px;">Device Manager</div>
<svg style="position:absolute;left:1410px;top:297px;" width="17" height="15" viewBox="0 0 17 15"><path d="M1.2 13 V8.5 C1.2 5.5 3.5 4 6.5 4 C7.5 2.8 9.5 2.5 11 3.1 C12.6 3.7 13.3 5.2 13.2 6.8 C13.2 7.5 13.8 7.5 13.9 6.8 C14 5.5 13.6 4.4 14.2 3.5 C14.8 2.7 15.9 3.1 15.6 4.1 C15.2 5.1 15.6 6.4 15.4 7.6 C15.1 9.4 13.2 9.9 12 8.8 C11.4 9.4 10.6 9.8 10 9.8 V13 H7.6 V10.8 H4.6 V13 Z" fill="#6e6e6e"/><path d="M7 5.2 C7.8 6.8 9.4 7.2 10.6 6.4" stroke="#f2f2f2" stroke-width="0.6" fill="none" opacity="0.7"/></svg>
<div style="position:absolute;left:1425.0px;top:316px;line-height:16px;height:16px;font-size:12px;color:#1c1c1c;white-space:pre;transform-origin:0 0;transform:rotate(90deg);letter-spacing:-0.336px;">Gradle</div>
<div style="position:absolute;left:1407px;top:542px;width:22px;height:128px;background:#bdbdbd;"></div>
<svg style="position:absolute;left:1411px;top:554px;" width="15" height="16" viewBox="0 0 15 16"><rect x="2.2" y="2.6" width="7.8" height="11" rx="1.2" stroke="#6e6e6e" stroke-width="1.3" fill="none"/><rect x="8" y="9" width="7" height="6" fill="#bdbdbd"/><rect x="9" y="10" width="5" height="4" stroke="#6e6e6e" stroke-width="1" fill="#bdbdbd"/><circle cx="12.5" cy="13.2" r="2.4" fill="#2dbd4e"/></svg>
<div style="position:absolute;left:1425.0px;top:573px;line-height:16px;height:16px;font-size:12px;color:#1c1c1c;white-space:pre;transform-origin:0 0;transform:rotate(90deg);letter-spacing:-0.681px;">Running Devices</div>
<svg style="position:absolute;left:1412px;top:683px;" width="12" height="15" viewBox="0 0 12 15"><rect x="1" y="1" width="10" height="13" rx="1.2" stroke="#6e6e6e" stroke-width="1.4" fill="none"/><path d="M1 11 H11" stroke="#6e6e6e" stroke-width="1.2"/></svg>
<div style="position:absolute;left:1425.0px;top:700px;line-height:16px;height:16px;font-size:12px;color:#1c1c1c;white-space:pre;transform-origin:0 0;transform:rotate(90deg);letter-spacing:-0.568px;">Device File Explorer</div>
<div style="position:absolute;left:23px;top:628px;width:1384px;height:1px;background:#d1d1d1;"></div>
<div style="position:absolute;left:23px;top:629px;width:1384px;height:26px;background:#e4e7ee;"></div>
<div style="position:absolute;left:23px;top:655px;width:1384px;height:1px;background:#d1d1d1;"></div>
<div style="position:absolute;left:29.2px;top:633.84px;line-height:18px;font-size:12px;font-family:'Liberation Sans',sans-serif;color:#000;white-space:pre;letter-spacing:-0.562px;">Run:</div>
<svg style="position:absolute;left:73px;top:635.5px;" width="14" height="14" viewBox="0 0 16 16"><path d="M1 12 A7 6.5 0 0 1 15 12 Z" fill="#7fd8a8"/><path d="M3.2 4.2 L5 7 M12.8 4.2 L11 7" stroke="#7fd8a8" stroke-width="1.1" stroke-linecap="round"/><circle cx="5.2" cy="9.5" r="0.8" fill="#e4e7ee"/><circle cx="10.8" cy="9.5" r="0.8" fill="#e4e7ee"/></svg>
<div style="position:absolute;left:92.3px;top:633.84px;line-height:18px;font-size:12px;font-family:'Liberation Sans',sans-serif;color:#000;white-space:pre;letter-spacing:-0.374px;">app</div>
<svg style="position:absolute;left:119px;top:638.5px;" width="8" height="8" viewBox="0 0 8 8"><path d="M0.8 0.8 L7.2 7.2 M7.2 0.8 L0.8 7.2" stroke="#a8a8a8" stroke-width="1"/></svg>
<svg style="position:absolute;left:1360px;top:634px;" width="16" height="16" viewBox="0 0 16 16"><path d="M6.74 3.26 L6.90 1.59 L9.10 1.59 L9.26 3.26 L10.46 3.76 L11.75 2.69 L13.31 4.25 L12.24 5.54 L12.74 6.74 L14.41 6.90 L14.41 9.10 L12.74 9.26 L12.24 10.46 L13.31 11.75 L11.75 13.31 L10.46 12.24 L9.26 12.74 L9.10 14.41 L6.90 14.41 L6.74 12.74 L5.54 12.24 L4.25 13.31 L2.69 11.75 L3.76 10.46 L3.26 9.26 L1.59 9.10 L1.59 6.90 L3.26 6.74 L3.76 5.54 L2.69 4.25 L4.25 2.69 L5.54 3.76 Z" fill="#6e6e6e" stroke="#6e6e6e" stroke-width="0.6" stroke-linejoin="round"/><circle cx="8" cy="8" r="2.1" fill="#e4e7ee"/></svg>
<div style="position:absolute;left:1388px;top:641px;width:13px;height:2px;background:#6e6e6e;"></div>
<div style="position:absolute;left:23px;top:656px;width:28px;height:156px;background:#f2f2f2;"></div>
<div style="position:absolute;left:51px;top:656px;width:1px;height:156px;background:#d1d1d1;"></div>
<div style="position:absolute;left:52px;top:656px;width:28px;height:156px;background:#f2f2f2;"></div>
<div style="position:absolute;left:80px;top:656px;width:1px;height:156px;background:#d1d1d1;"></div>
<svg style="position:absolute;left:33px;top:664px;" width="10" height="12" viewBox="0 0 10 12"><path d="M0.2 0 L9.8 5.9 L0.2 11.8 Z" fill="#59a869"/></svg>
<svg style="position:absolute;left:29px;top:688px;" width="16" height="16" viewBox="0 0 14 14"><path d="M12.8 3.8 L10.6 6 L8.6 4 L10.8 1.8 C8.8 1 6.5 1.8 5.8 3.6 C5.4 4.7 5.5 5.6 5.9 6.4 L1 11.3 L2.7 13 L7.6 8.1 C8.6 8.6 9.8 8.6 10.8 8 C12.6 7.2 13.4 5.5 12.8 3.8 Z" fill="#6e6e6e"/></svg>
<div style="position:absolute;left:27px;top:712px;width:19.5px;height:1px;background:#cdcdcd;"></div>
<div style="position:absolute;left:32px;top:724px;width:10.5px;height:10.5px;background:#c4c4c4;"></div>
<div style="position:absolute;left:27px;top:745px;width:19.5px;height:1px;background:#cdcdcd;"></div>
<svg style="position:absolute;left:31px;top:757.1px;" width="13" height="11" viewBox="0 0 13 11"><rect x="0" y="0" width="6.8" height="4.5" fill="#6e6e6e"/><rect x="8.2" y="0" width="3.8" height="4.5" fill="#6e6e6e"/><rect x="0" y="6" width="12" height="3.8" fill="#6e6e6e"/></svg>
<div style="position:absolute;left:27px;top:778px;width:19.5px;height:1px;background:#cdcdcd;"></div>
<svg style="position:absolute;left:29px;top:787px;" width="16" height="16" viewBox="0 0 14 14"><path d="M8 1 L13 6 L11.5 6.8 L9.6 6.6 L7.4 8.8 L7.6 11 L6.6 12 L2 7.4 L3 6.4 L5.2 6.6 L7.4 4.4 L7.2 2.5 Z" fill="#6e6e6e"/><path d="M4.5 9.5 L1 13" stroke="#6e6e6e" stroke-width="1.4"/></svg>
<svg style="position:absolute;left:60px;top:664px;" width="12" height="14" viewBox="0 0 12 14"><path d="M6 13 V2.4 M1.6 6.4 L6 2 L10.4 6.4" stroke="#666" stroke-width="1.9" fill="none"/></svg>
<svg style="position:absolute;left:60px;top:690px;" width="12" height="14" viewBox="0 0 12 14"><path d="M6 1 V11.6 M1.6 7.6 L6 12 L10.4 7.6" stroke="#666" stroke-width="1.9" fill="none"/></svg>
<svg style="position:absolute;left:59px;top:716px;" width="14" height="14" viewBox="0 0 14 14"><path d="M1 1.8 H13 M1 7.7 H10.8 A2.2 2.2 0 0 1 10.8 12.1 H8 M1 12.1 H4" stroke="#666" stroke-width="1.9" fill="none"/><path d="M8.8 9.4 L5.6 12.1 L8.8 14.8 Z" fill="#666"/></svg>
<div style="position:absolute;left:55px;top:738px;width:22px;height:22px;background:#d6d6d6;border-radius:3px"></div>
<svg style="position:absolute;left:59px;top:741px;" width="14" height="14" viewBox="0 0 14 14"><path d="M1 4.1 H5 M1 7.7 H5 M1 12 H13" stroke="#666" stroke-width="1.9"/><path d="M10 1 V7" stroke="#666" stroke-width="1.9"/><path d="M6.6 6 H13.4 L10 9.8 Z" fill="#666"/></svg>
<svg style="position:absolute;left:59px;top:768px;" width="14" height="14" viewBox="0 0 14 14"><rect x="3" y="0.8" width="8" height="3" fill="#666"/><rect x="0.5" y="4.8" width="13" height="5.4" fill="#666"/><rect x="3.4" y="8.4" width="7.2" height="4.6" fill="#f2f2f2" stroke="#666" stroke-width="1.3"/></svg>
<svg style="position:absolute;left:62px;top:799px;" width="9" height="7" viewBox="0 0 9 7"><path d="M0.8 0.8 L3.6 3.5 L0.8 6.2 M4.8 0.8 L7.6 3.5 L4.8 6.2" stroke="#8a8a8a" stroke-width="0.9" fill="none"/></svg>
<div style="position:absolute;left:60px;top:652.2px;width:78px;height:3.6px;background:#3d7fd0;border-radius:1.5px"></div>
<div style="position:absolute;left:81px;top:656px;width:1326px;height:156px;background:#fff;"></div>
<div style="position:absolute;left:92px;top:680px;font-family:'Liberation Mono',monospace;font-size:13.333px;line-height:22px;white-space:pre;color:#0c0c0c;-webkit-text-stroke:0.28px;transform:scaleY(1.09);transform-origin:0 14.55px;">11/13 14:44:21: Launching 'app' on Nexus 5 API 27.</div>
<div style="position:absolute;left:92px;top:702px;font-family:'Liberation Mono',monospace;font-size:13.333px;line-height:22px;white-space:pre;color:#0c0c0c;-webkit-text-stroke:0.28px;transform:scaleY(1.09);transform-origin:0 14.55px;">Install successfully finished in 1 s 329 ms.</div>
<div style="position:absolute;left:92px;top:724px;font-family:'Liberation Mono',monospace;font-size:13.333px;line-height:22px;white-space:pre;color:#0c0c0c;-webkit-text-stroke:0.28px;transform:scaleY(1.09);transform-origin:0 14.55px;">$ adb shell am start -n "com.game.my_native_activity/android.app.NativeActivity" -a android.intent.action.MAIN -c android.intent.category.LAUNCHER</div>
<div style="position:absolute;left:92px;top:746px;font-family:'Liberation Mono',monospace;font-size:13.333px;line-height:22px;white-space:pre;color:#0c0c0c;-webkit-text-stroke:0.28px;transform:scaleY(1.09);transform-origin:0 14.55px;color:#2a24f6;text-decoration:underline;text-underline-offset:1.5px;text-decoration-skip-ink:none">Open logcat panel for emulator Nexus 5 API 27</div>
<div style="position:absolute;left:92px;top:768px;font-family:'Liberation Mono',monospace;font-size:13.333px;line-height:22px;white-space:pre;color:#0c0c0c;-webkit-text-stroke:0.28px;transform:scaleY(1.09);transform-origin:0 14.55px;">Connected to process 21500 on device 'Nexus_5_API_27 [emulator-5554]'.</div>
<div style="position:absolute;left:92px;top:790px;width:2px;height:18px;background:#000;"></div>
<div style="position:absolute;left:1px;top:812px;width:1428px;height:1px;background:#d1d1d1;"></div>
<div style="position:absolute;left:1px;top:813px;width:1428px;height:21px;background:#f2f2f2;"></div>
<div style="position:absolute;left:72px;top:813px;width:55.5px;height:21px;background:#c4c4c4;"></div>
<svg style="position:absolute;left:32px;top:818px;" width="9" height="13" viewBox="0 0 9 13"><path d="M2.2 1 V12.4 M2.2 9.2 C6.6 9 7 7 7 3.5" stroke="#6e6e6e" stroke-width="1.8" fill="none"/><circle cx="7" cy="3" r="2" fill="#6e6e6e"/><circle cx="2.2" cy="2" r="1.7" fill="#6e6e6e"/></svg>
<div style="position:absolute;left:48.6px;top:815.64px;line-height:18px;font-size:12px;font-family:'Liberation Sans',sans-serif;color:#000;white-space:pre;letter-spacing:-0.378px;">Git</div>
<svg style="position:absolute;left:82.5px;top:819px;" width="9" height="11" viewBox="0 0 9 11"><path d="M0 0 L9 5.5 L0 11 Z" fill="#6e6e6e"/></svg>
<div style="position:absolute;left:98.5px;top:815.64px;line-height:18px;font-size:12px;font-family:'Liberation Sans',sans-serif;color:#000;white-space:pre;letter-spacing:-0.838px;">Run</div>
<svg style="position:absolute;left:140px;top:819px;" width="11" height="11" viewBox="0 0 11 11"><path d="M0 1.5 H2 M0 5.5 H2 M0 9.5 H2 M3.5 1.5 H11 M3.5 5.5 H11 M3.5 9.5 H11" stroke="#6e6e6e" stroke-width="1.8"/></svg>
<div style="position:absolute;left:154.4px;top:815.64px;line-height:18px;font-size:12px;font-family:'Liberation Sans',sans-serif;color:#000;white-space:pre;letter-spacing:-0.637px;">TODO</div>
<svg style="position:absolute;left:208px;top:819px;" width="10" height="10" viewBox="0 0 10 10"><circle cx="5" cy="5" r="5" fill="#6e6e6e"/><path d="M5 2 V5.8" stroke="#f2f2f2" stroke-width="1.4"/><circle cx="5" cy="7.7" r="0.8" fill="#f2f2f2"/></svg>
<div style="position:absolute;left:224px;top:815.64px;line-height:18px;font-size:12px;font-family:'Liberation Sans',sans-serif;color:#000;white-space:pre;letter-spacing:-0.548px;">Problems</div>
<svg style="position:absolute;left:293px;top:819px;" width="12" height="10" viewBox="0 0 12 10"><rect width="12" height="10" rx="1" fill="#6e6e6e"/><path d="M2 2.5 L5 5 L2 7.5 M6 7.8 H10" stroke="#f2f2f2" stroke-width="1.1" fill="none"/></svg>
<div style="position:absolute;left:309px;top:815.64px;line-height:18px;font-size:12px;font-family:'Liberation Sans',sans-serif;color:#000;white-space:pre;letter-spacing:-0.168px;">Terminal</div>
<svg style="position:absolute;left:377px;top:817.5px;" width="12" height="14" viewBox="0 0 12 14"><path d="M2.4 5 H9.6 V10.5 C9.6 12.6 8 13.2 6 13.2 C4 13.2 2.4 12.6 2.4 10.5 Z" fill="#6e6e6e"/><path d="M3 4.2 C3 0.4 9 0.4 9 4.2 Z" fill="#6e6e6e"/><path d="M0.2 6.6 H2.4 M0.2 10 H2.4 M9.6 6.6 H11.8 M9.6 10 H11.8 M1.6 4.6 H10.4" stroke="#6e6e6e" stroke-width="1.3"/></svg>
<div style="position:absolute;left:393px;top:815.64px;line-height:18px;font-size:12px;font-family:'Liberation Sans',sans-serif;color:#000;white-space:pre;letter-spacing:-0.099px;">App Inspection</div>
<svg style="position:absolute;left:493.5px;top:821.4px;" width="11" height="9" viewBox="0 0 11 9"><path d="M0 1.2 H11 M0 4.4 H7.6 M0 7.6 H10" stroke="#6e6e6e" stroke-width="1.9"/></svg>
<div style="position:absolute;left:510px;top:815.64px;line-height:18px;font-size:12px;font-family:'Liberation Sans',sans-serif;color:#000;white-space:pre;letter-spacing:-0.338px;">Logcat</div>
<svg style="position:absolute;left:566px;top:818px;" width="14" height="13" viewBox="0 0 14 13"><path d="M3.5 1 H10.5 L13.3 4.5 L7 12 L0.7 4.5 Z M0.7 4.5 H13.3 M3.5 1 L5 4.5 L7 12 L9 4.5 L10.5 1 M7 1 L5 4.5 M7 1 L9 4.5" stroke="#6e6e6e" stroke-width="1.1" fill="none"/></svg>
<div style="position:absolute;left:584px;top:815.64px;line-height:18px;font-size:12px;font-family:'Liberation Sans',sans-serif;color:#000;white-space:pre;letter-spacing:-0.136px;">App Quality Insights</div>
<svg style="position:absolute;left:712px;top:818.5px;" width="12" height="12" viewBox="0 0 12 12"><path d="M3.5 0.5 H8.5 L11.5 3.5 V8.5 L8.5 11.5 H3.5 L0.5 8.5 V3.5 Z" fill="#6e6e6e"/><path d="M4.3 3 L8.8 6 L4.3 9 Z" fill="#f2f2f2"/></svg>
<div style="position:absolute;left:729px;top:815.64px;line-height:18px;font-size:12px;font-family:'Liberation Sans',sans-serif;color:#000;white-space:pre;letter-spacing:-0.689px;">Services</div>
<svg style="position:absolute;left:787px;top:818px;" width="14" height="13" viewBox="0 0 14 13"><path d="M1.5 4.5 L5 1 L8.3 3 L6.5 4.8 L13.2 11.5 L11.8 12.8 L5.2 6.2 L3.5 7.8 Z" fill="#6e6e6e"/></svg>
<div style="position:absolute;left:805px;top:815.64px;line-height:18px;font-size:12px;font-family:'Liberation Sans',sans-serif;color:#000;white-space:pre;letter-spacing:-0.137px;">Build</div>
<svg style="position:absolute;left:850px;top:819px;" width="13" height="11" viewBox="0 0 13 11"><path d="M1.5 10 A5 5 0 0 1 8 4.5" stroke="#6e6e6e" stroke-width="1.6" fill="none"/><path d="M6 10 L9.5 3.5" stroke="#6e6e6e" stroke-width="1.6"/><path d="M10.5 6 A5 5 0 0 1 11.5 10" stroke="#6e6e6e" stroke-width="1.6" fill="none"/></svg>
<div style="position:absolute;left:867px;top:815.64px;line-height:18px;font-size:12px;font-family:'Liberation Sans',sans-serif;color:#000;white-space:pre;letter-spacing:-0.126px;">Profiler</div>
<svg style="position:absolute;left:1293px;top:818px;" width="14" height="13" viewBox="0 0 14 13"><path d="M0.6 8 V0.6 H9.5" stroke="#6e6e6e" stroke-width="1.1" fill="none"/><path d="M3 10.5 V3 H12.5 V6" stroke="#6e6e6e" stroke-width="1.1" fill="none"/><circle cx="8.5" cy="8.5" r="2.6" stroke="#6e6e6e" stroke-width="1.2" fill="none"/><path d="M10.5 10.5 L13 13" stroke="#6e6e6e" stroke-width="1.4"/></svg>
<div style="position:absolute;left:1310.5px;top:815.64px;line-height:18px;font-size:12px;font-family:'Liberation Sans',sans-serif;color:#000;white-space:pre;letter-spacing:-0.264px;">Layout Inspector</div>
<div style="position:absolute;left:1px;top:834px;width:1428px;height:1px;background:#d1d1d1;"></div>
<div style="position:absolute;left:1px;top:835px;width:1428px;height:20px;background:#f2f2f2;"></div>
<svg style="position:absolute;left:6px;top:839px;" width="13" height="12" viewBox="0 0 13 12"><rect x="3.2" y="0.6" width="9" height="8.5" stroke="#6e6e6e" stroke-width="1.1" fill="none"/><path d="M0.6 3 V11.4 H9.5" stroke="#6e6e6e" stroke-width="1.1" fill="none"/></svg>
<div style="position:absolute;left:28px;top:835.84px;line-height:18px;font-size:12px;font-family:'Liberation Sans',sans-serif;color:#000;white-space:pre;letter-spacing:-0.069px;">* daemon started successfully (9 minutes ago)</div>
<div style="position:absolute;left:830px;top:835.84px;line-height:18px;font-size:12px;font-family:'Liberation Sans',sans-serif;color:#000;white-space:pre;letter-spacing:-0.727px;">7:1</div>
<div style="position:absolute;left:857px;top:835.84px;line-height:18px;font-size:12px;font-family:'Liberation Sans',sans-serif;color:#000;white-space:pre;letter-spacing:-0.959px;">CRLF</div>
<div style="position:absolute;left:896px;top:835.84px;line-height:18px;font-size:12px;font-family:'Liberation Sans',sans-serif;color:#000;white-space:pre;letter-spacing:-0.599px;">UTF-8</div>
<div style="position:absolute;left:939px;top:835.84px;line-height:18px;font-size:12px;font-family:'Liberation Sans',sans-serif;color:#000;white-space:pre;letter-spacing:0.210px;">.clang-tidy</div>
<div style="position:absolute;left:1008px;top:835.84px;line-height:18px;font-size:12px;font-family:'Liberation Sans',sans-serif;color:#000;white-space:pre;letter-spacing:-0.504px;">4 spaces</div>
<div style="position:absolute;left:1064.5px;top:835.84px;line-height:18px;font-size:12px;font-family:'Liberation Sans',sans-serif;color:#8c8c8c;white-space:pre;letter-spacing:-0.123px;">C++: AndroidNative_BasicGam...n | debug | x86</div>
<svg style="position:absolute;left:1327px;top:838px;" width="12" height="14" viewBox="0 0 12 14"><path d="M2.6 2 V12 M2.6 9.4 C7.4 8.6 9 7 9 2.6" stroke="#6e6e6e" stroke-width="1.7" fill="none"/><circle cx="2.6" cy="2" r="1.8" fill="#6e6e6e"/><circle cx="9" cy="2.4" r="1.8" fill="#6e6e6e"/><circle cx="2.6" cy="12" r="1.8" fill="#6e6e6e"/></svg>
<div style="position:absolute;left:1343.5px;top:835.84px;line-height:18px;font-size:12px;font-family:'Liberation Sans',sans-serif;color:#000;white-space:pre;letter-spacing:0.122px;">main</div>
<svg style="position:absolute;left:1380px;top:839px;" width="12" height="12" viewBox="0 0 12 12"><rect x="2.5" y="5.5" width="9" height="6" fill="#5a5a5a"/><path d="M1 5.5 V3.5 A2.2 2.2 0 0 1 5.4 3.5 V5.5" stroke="#5a5a5a" stroke-width="1.3" fill="none"/></svg>
<svg style="position:absolute;left:1405px;top:839px;" width="12" height="12" viewBox="0 0 12 12"><path d="M1.5 0 H10.5 A1.5 1.5 0 0 1 12 1.5 V11.4 L9.2 9 H1.5 A1.5 1.5 0 0 1 0 7.5 V1.5 A1.5 1.5 0 0 1 1.5 0 Z" fill="#666"/><path d="M6 1.4 V5" stroke="#f2f2f2" stroke-width="1.7"/><rect x="5.15" y="6.2" width="1.7" height="1.7" fill="#f2f2f2"/></svg>
<div style="position:absolute;left:0px;top:0px;width:1430px;height:1px;background:#5f5f5f;"></div>
<div style="position:absolute;left:0px;top:0px;width:1px;height:856px;background:#5f5f5f;"></div>
<div style="position:absolute;left:1429px;top:0px;width:1px;height:856px;background:#505050;"></div>
<div style="position:absolute;left:0px;top:855px;width:1430px;height:1px;background:#5f5f5f;"></div>
</body></html>
